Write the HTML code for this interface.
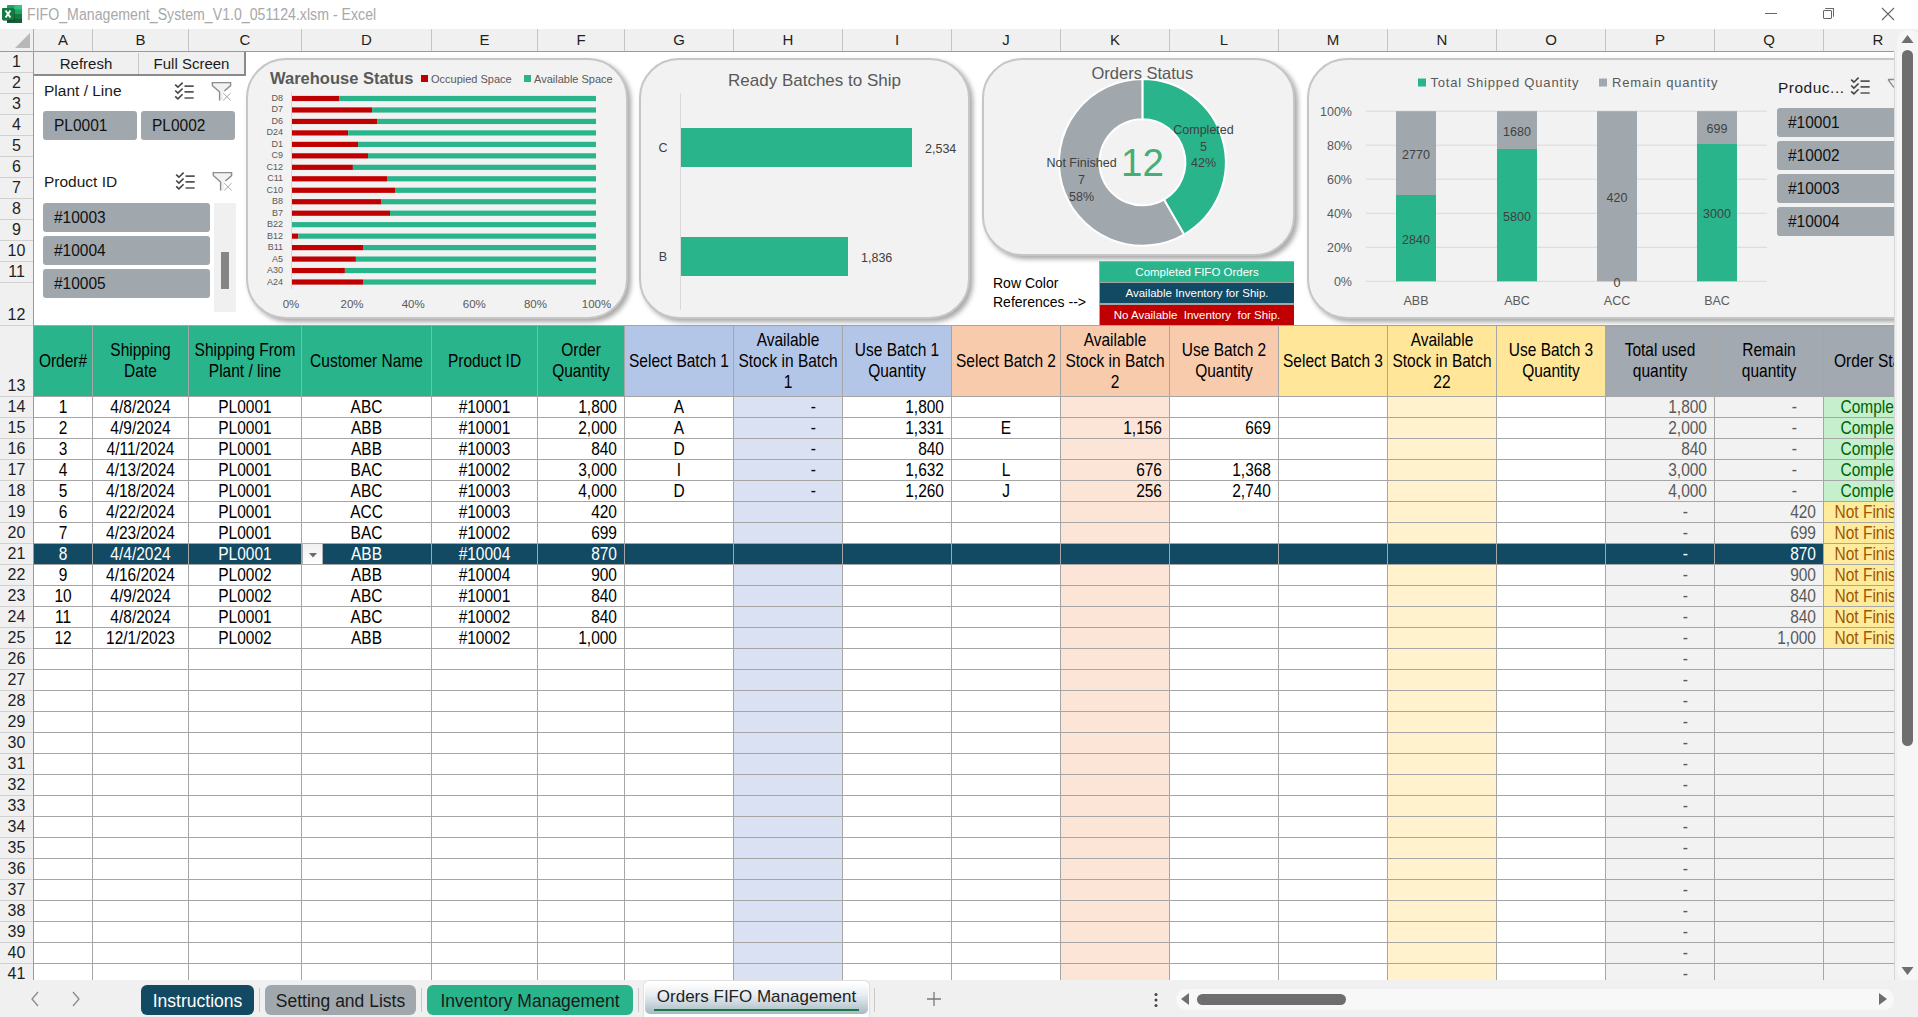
<!DOCTYPE html><html><head><meta charset="utf-8"><style>
*{margin:0;padding:0;box-sizing:border-box}
html,body{width:1918px;height:1017px;overflow:hidden;background:#fff;font-family:"Liberation Sans",sans-serif;position:relative}
.a{position:absolute}
.c{position:absolute;white-space:nowrap;overflow:hidden;font-size:15.5px;color:#000;line-height:22px}
.ctr{text-align:center}
.t{display:inline-block;transform:scaleY(1.17);transform-origin:50% 16.4px}
.hd .t{transform-origin:50% 15.9px}
.sy{display:inline-block;transform:scaleY(1.1);transform-origin:50% 20.5px}
.rt{text-align:right}
.hd{position:absolute;display:flex;align-items:center;justify-content:center;text-align:center;font-size:15.5px;line-height:21px;color:#000}
.colh{position:absolute;top:29px;height:22px;font-size:15px;line-height:22px;text-align:center;color:#1f1f1f;border-right:1px solid #c4c4c4}
.rowh{position:absolute;left:0;width:33px;font-size:16px;text-align:center;color:#1f1f1f;border-bottom:1px solid #d0d0d0}
</style></head><body>

<div class="a" style="left:0;top:0;width:1918px;height:29px;background:#fff"></div>
<svg class="a" style="left:0;top:0" width="26" height="26" viewBox="0 0 26 26">
<rect x="7" y="5" width="15" height="18" rx="0.8" fill="#21a366"/>
<rect x="14.5" y="5" width="7.5" height="4.5" fill="#33c481"/>
<rect x="7" y="14" width="15" height="4.5" fill="#107c41"/>
<rect x="7" y="18.5" width="15" height="4.5" fill="#185c37"/>
<rect x="3" y="9" width="12" height="12" fill="#0b3d20" opacity="0.5"/>
<rect x="2" y="8" width="12" height="12" rx="0.8" fill="#107c41"/>
<path d="M5.6 10.5L10.4 17.5M10.4 10.5L5.6 17.5" stroke="#fff" stroke-width="1.9"/>
</svg>
<div class="a" style="left:27px;top:5px;font-size:15.5px;line-height:20px;color:#a8a8a8;transform:scale(0.9135,1.1);transform-origin:0 15.4px">FIFO_Management_System_V1.0_051124.xlsm - Excel</div>
<div class="a" style="left:1765px;top:13px;width:12px;height:1px;background:#666"></div>
<div class="a" style="left:1823px;top:10px;width:9px;height:9px;border:1px solid #666;border-radius:1px;background:#fff"></div>
<div class="a" style="left:1825px;top:8px;width:9px;height:9px;border-top:1px solid #666;border-right:1px solid #666;border-radius:1px"></div>
<svg class="a" style="left:1881px;top:7px" width="14" height="14"><path d="M1 1L13 13M13 1L1 13" stroke="#666" stroke-width="1.1"/></svg>
<div class="a" style="left:0;top:29px;width:1894px;height:23px;background:#f0f0f0;border-bottom:1px solid #9a9a9a"></div>
<svg class="a" style="left:14px;top:33px" width="17" height="16"><path d="M16 0L16 15L1 15Z" fill="#b8b8b8"/></svg>
<div class="a" style="left:33px;top:29px;width:1px;height:23px;background:#ababab"></div>
<div class="colh" style="left:34px;width:59px">A</div>
<div class="colh" style="left:93px;width:96px">B</div>
<div class="colh" style="left:189px;width:113px">C</div>
<div class="colh" style="left:302px;width:130px">D</div>
<div class="colh" style="left:432px;width:106px">E</div>
<div class="colh" style="left:538px;width:87px">F</div>
<div class="colh" style="left:625px;width:109px">G</div>
<div class="colh" style="left:734px;width:109px">H</div>
<div class="colh" style="left:843px;width:109px">I</div>
<div class="colh" style="left:952px;width:109px">J</div>
<div class="colh" style="left:1061px;width:109px">K</div>
<div class="colh" style="left:1170px;width:109px">L</div>
<div class="colh" style="left:1279px;width:109px">M</div>
<div class="colh" style="left:1388px;width:109px">N</div>
<div class="colh" style="left:1497px;width:109px">O</div>
<div class="colh" style="left:1606px;width:109px">P</div>
<div class="colh" style="left:1715px;width:109px">Q</div>
<div class="colh" style="left:1824px;width:109px">R</div>
<div class="a" style="left:1894px;top:29px;width:24px;height:951px;background:#fff"></div>
<div class="a" style="left:0;top:52px;width:34px;height:928px;background:#f0f0f0;border-right:1px solid #9a9a9a"></div>
<div class="rowh" style="top:52px;height:21px;line-height:19px;padding-top:0px">1</div>
<div class="rowh" style="top:73px;height:21px;line-height:19px;padding-top:0px">2</div>
<div class="rowh" style="top:94px;height:21px;line-height:19px;padding-top:0px">3</div>
<div class="rowh" style="top:115px;height:21px;line-height:19px;padding-top:0px">4</div>
<div class="rowh" style="top:136px;height:21px;line-height:19px;padding-top:0px">5</div>
<div class="rowh" style="top:157px;height:21px;line-height:19px;padding-top:0px">6</div>
<div class="rowh" style="top:178px;height:21px;line-height:19px;padding-top:0px">7</div>
<div class="rowh" style="top:199px;height:21px;line-height:19px;padding-top:0px">8</div>
<div class="rowh" style="top:220px;height:21px;line-height:19px;padding-top:0px">9</div>
<div class="rowh" style="top:241px;height:21px;line-height:19px;padding-top:0px">10</div>
<div class="rowh" style="top:262px;height:21px;line-height:19px;padding-top:0px">11</div>
<div class="rowh" style="top:283px;height:43px;line-height:19px;padding-top:22px">12</div>
<div class="rowh" style="top:326px;height:71px;line-height:19px;padding-top:50px">13</div>
<div class="rowh" style="top:397px;height:21px;line-height:19px;padding-top:0px">14</div>
<div class="rowh" style="top:418px;height:21px;line-height:19px;padding-top:0px">15</div>
<div class="rowh" style="top:439px;height:21px;line-height:19px;padding-top:0px">16</div>
<div class="rowh" style="top:460px;height:21px;line-height:19px;padding-top:0px">17</div>
<div class="rowh" style="top:481px;height:21px;line-height:19px;padding-top:0px">18</div>
<div class="rowh" style="top:502px;height:21px;line-height:19px;padding-top:0px">19</div>
<div class="rowh" style="top:523px;height:21px;line-height:19px;padding-top:0px">20</div>
<div class="rowh" style="top:544px;height:21px;line-height:19px;padding-top:0px">21</div>
<div class="rowh" style="top:565px;height:21px;line-height:19px;padding-top:0px">22</div>
<div class="rowh" style="top:586px;height:21px;line-height:19px;padding-top:0px">23</div>
<div class="rowh" style="top:607px;height:21px;line-height:19px;padding-top:0px">24</div>
<div class="rowh" style="top:628px;height:21px;line-height:19px;padding-top:0px">25</div>
<div class="rowh" style="top:649px;height:21px;line-height:19px;padding-top:0px">26</div>
<div class="rowh" style="top:670px;height:21px;line-height:19px;padding-top:0px">27</div>
<div class="rowh" style="top:691px;height:21px;line-height:19px;padding-top:0px">28</div>
<div class="rowh" style="top:712px;height:21px;line-height:19px;padding-top:0px">29</div>
<div class="rowh" style="top:733px;height:21px;line-height:19px;padding-top:0px">30</div>
<div class="rowh" style="top:754px;height:21px;line-height:19px;padding-top:0px">31</div>
<div class="rowh" style="top:775px;height:21px;line-height:19px;padding-top:0px">32</div>
<div class="rowh" style="top:796px;height:21px;line-height:19px;padding-top:0px">33</div>
<div class="rowh" style="top:817px;height:21px;line-height:19px;padding-top:0px">34</div>
<div class="rowh" style="top:838px;height:21px;line-height:19px;padding-top:0px">35</div>
<div class="rowh" style="top:859px;height:21px;line-height:19px;padding-top:0px">36</div>
<div class="rowh" style="top:880px;height:21px;line-height:19px;padding-top:0px">37</div>
<div class="rowh" style="top:901px;height:21px;line-height:19px;padding-top:0px">38</div>
<div class="rowh" style="top:922px;height:21px;line-height:19px;padding-top:0px">39</div>
<div class="rowh" style="top:943px;height:21px;line-height:19px;padding-top:0px">40</div>
<div class="rowh" style="top:964px;height:21px;line-height:19px;padding-top:0px">41</div>
<div class="a" style="left:34px;top:52px;width:1860px;height:928px;overflow:hidden" id="grid">
<div class="hd" style="left:-1px;top:273px;width:60px;height:72px;background:#2ab48c;border:1px solid #a6a6a6;"><div><span class="t">Order#</span></div></div>
<div class="hd" style="left:58px;top:273px;width:97px;height:72px;background:#2ab48c;border:1px solid #a6a6a6;"><div><span class="t">Shipping</span><br><span class="t">Date</span></div></div>
<div class="hd" style="left:154px;top:273px;width:114px;height:72px;background:#2ab48c;border:1px solid #a6a6a6;"><div><span class="t">Shipping From</span><br><span class="t">Plant / line</span></div></div>
<div class="hd" style="left:267px;top:273px;width:131px;height:72px;background:#2ab48c;border:1px solid #a6a6a6;"><div><span class="t">Customer Name</span></div></div>
<div class="hd" style="left:397px;top:273px;width:107px;height:72px;background:#2ab48c;border:1px solid #a6a6a6;"><div><span class="t">Product ID</span></div></div>
<div class="hd" style="left:503px;top:273px;width:88px;height:72px;background:#2ab48c;border:1px solid #a6a6a6;"><div><span class="t">Order</span><br><span class="t">Quantity</span></div></div>
<div class="hd" style="left:590px;top:273px;width:110px;height:72px;background:#b4c6e7;border:1px solid #a6a6a6;"><div><span class="t">Select Batch 1</span></div></div>
<div class="hd" style="left:699px;top:273px;width:110px;height:72px;background:#b4c6e7;border:1px solid #a6a6a6;"><div><span class="t">Available</span><br><span class="t">Stock in Batch</span><br><span class="t">1</span></div></div>
<div class="hd" style="left:808px;top:273px;width:110px;height:72px;background:#b4c6e7;border:1px solid #a6a6a6;"><div><span class="t">Use Batch 1</span><br><span class="t">Quantity</span></div></div>
<div class="hd" style="left:917px;top:273px;width:110px;height:72px;background:#f8cbad;border:1px solid #a6a6a6;"><div><span class="t">Select Batch 2</span></div></div>
<div class="hd" style="left:1026px;top:273px;width:110px;height:72px;background:#f8cbad;border:1px solid #a6a6a6;"><div><span class="t">Available</span><br><span class="t">Stock in Batch</span><br><span class="t">2</span></div></div>
<div class="hd" style="left:1135px;top:273px;width:110px;height:72px;background:#f8cbad;border:1px solid #a6a6a6;"><div><span class="t">Use Batch 2</span><br><span class="t">Quantity</span></div></div>
<div class="hd" style="left:1244px;top:273px;width:110px;height:72px;background:#ffe699;border:1px solid #a6a6a6;"><div><span class="t">Select Batch 3</span></div></div>
<div class="hd" style="left:1353px;top:273px;width:110px;height:72px;background:#ffe699;border:1px solid #a6a6a6;"><div><span class="t">Available</span><br><span class="t">Stock in Batch</span><br><span class="t">22</span></div></div>
<div class="hd" style="left:1462px;top:273px;width:110px;height:72px;background:#ffe699;border:1px solid #a6a6a6;"><div><span class="t">Use Batch 3</span><br><span class="t">Quantity</span></div></div>
<div class="hd" style="left:1571px;top:273px;width:110px;height:72px;background:#a2a9b0;border:1px solid #a6a6a6;"><div><span class="t">Total used</span><br><span class="t">quantity</span></div></div>
<div class="hd" style="left:1680px;top:273px;width:110px;height:72px;background:#a2a9b0;border:1px solid #a6a6a6;"><div><span class="t">Remain</span><br><span class="t">quantity</span></div></div>
<div class="hd" style="left:1789px;top:273px;width:110px;height:72px;background:#a2a9b0;border:1px solid #a6a6a6;"><div><span class="t">Order Status</span></div></div>
<div class="c ctr" style="left:-1px;top:344px;width:60px;height:22px;background:#fff;border:1px solid #a6a6a6;color:#000;"><span class="t">1</span></div>
<div class="c ctr" style="left:58px;top:344px;width:97px;height:22px;background:#fff;border:1px solid #a6a6a6;color:#000;"><span class="t">4/8/2024</span></div>
<div class="c ctr" style="left:154px;top:344px;width:114px;height:22px;background:#fff;border:1px solid #a6a6a6;color:#000;"><span class="t">PL0001</span></div>
<div class="c ctr" style="left:267px;top:344px;width:131px;height:22px;background:#fff;border:1px solid #a6a6a6;color:#000;"><span class="t">ABC</span></div>
<div class="c ctr" style="left:397px;top:344px;width:107px;height:22px;background:#fff;border:1px solid #a6a6a6;color:#000;"><span class="t">#10001</span></div>
<div class="c rt" style="left:503px;top:344px;width:88px;height:22px;background:#fff;border:1px solid #a6a6a6;color:#000;padding-right:7px;"><span class="t">1,800</span></div>
<div class="c ctr" style="left:590px;top:344px;width:110px;height:22px;background:#fff;border:1px solid #a6a6a6;color:#000;"><span class="t">A</span></div>
<div class="c rt" style="left:699px;top:344px;width:110px;height:22px;background:#d9e1f2;border:1px solid #a6a6a6;color:#000;padding-right:26px;"><span class="t">-</span></div>
<div class="c rt" style="left:808px;top:344px;width:110px;height:22px;background:#fff;border:1px solid #a6a6a6;color:#000;padding-right:7px;"><span class="t">1,800</span></div>
<div class="c ctr" style="left:917px;top:344px;width:110px;height:22px;background:#fff;border:1px solid #a6a6a6;color:#000;"></div>
<div class="c rt" style="left:1026px;top:344px;width:110px;height:22px;background:#fce4d6;border:1px solid #a6a6a6;color:#000;padding-right:7px;"></div>
<div class="c rt" style="left:1135px;top:344px;width:110px;height:22px;background:#fff;border:1px solid #a6a6a6;color:#000;padding-right:7px;"></div>
<div class="c ctr" style="left:1244px;top:344px;width:110px;height:22px;background:#fff;border:1px solid #a6a6a6;color:#000;"></div>
<div class="c rt" style="left:1353px;top:344px;width:110px;height:22px;background:#fff2cc;border:1px solid #a6a6a6;color:#000;padding-right:7px;"></div>
<div class="c rt" style="left:1462px;top:344px;width:110px;height:22px;background:#fff;border:1px solid #a6a6a6;color:#000;padding-right:7px;"></div>
<div class="c rt" style="left:1571px;top:344px;width:110px;height:22px;background:#f2f2f2;border:1px solid #a6a6a6;color:#595959;padding-right:7px;"><span class="t">1,800</span></div>
<div class="c rt" style="left:1680px;top:344px;width:110px;height:22px;background:#f2f2f2;border:1px solid #a6a6a6;color:#595959;padding-right:26px;"><span class="t">-</span></div>
<div class="c ctr" style="left:1789px;top:344px;width:110px;height:22px;background:#c6efce;border:1px solid #a6a6a6;color:#006100;padding-left:0px;"><span class="t">Completed</span></div>
<div class="c ctr" style="left:-1px;top:365px;width:60px;height:22px;background:#fff;border:1px solid #a6a6a6;color:#000;"><span class="t">2</span></div>
<div class="c ctr" style="left:58px;top:365px;width:97px;height:22px;background:#fff;border:1px solid #a6a6a6;color:#000;"><span class="t">4/9/2024</span></div>
<div class="c ctr" style="left:154px;top:365px;width:114px;height:22px;background:#fff;border:1px solid #a6a6a6;color:#000;"><span class="t">PL0001</span></div>
<div class="c ctr" style="left:267px;top:365px;width:131px;height:22px;background:#fff;border:1px solid #a6a6a6;color:#000;"><span class="t">ABB</span></div>
<div class="c ctr" style="left:397px;top:365px;width:107px;height:22px;background:#fff;border:1px solid #a6a6a6;color:#000;"><span class="t">#10001</span></div>
<div class="c rt" style="left:503px;top:365px;width:88px;height:22px;background:#fff;border:1px solid #a6a6a6;color:#000;padding-right:7px;"><span class="t">2,000</span></div>
<div class="c ctr" style="left:590px;top:365px;width:110px;height:22px;background:#fff;border:1px solid #a6a6a6;color:#000;"><span class="t">A</span></div>
<div class="c rt" style="left:699px;top:365px;width:110px;height:22px;background:#d9e1f2;border:1px solid #a6a6a6;color:#000;padding-right:26px;"><span class="t">-</span></div>
<div class="c rt" style="left:808px;top:365px;width:110px;height:22px;background:#fff;border:1px solid #a6a6a6;color:#000;padding-right:7px;"><span class="t">1,331</span></div>
<div class="c ctr" style="left:917px;top:365px;width:110px;height:22px;background:#fff;border:1px solid #a6a6a6;color:#000;"><span class="t">E</span></div>
<div class="c rt" style="left:1026px;top:365px;width:110px;height:22px;background:#fce4d6;border:1px solid #a6a6a6;color:#000;padding-right:7px;"><span class="t">1,156</span></div>
<div class="c rt" style="left:1135px;top:365px;width:110px;height:22px;background:#fff;border:1px solid #a6a6a6;color:#000;padding-right:7px;"><span class="t">669</span></div>
<div class="c ctr" style="left:1244px;top:365px;width:110px;height:22px;background:#fff;border:1px solid #a6a6a6;color:#000;"></div>
<div class="c rt" style="left:1353px;top:365px;width:110px;height:22px;background:#fff2cc;border:1px solid #a6a6a6;color:#000;padding-right:7px;"></div>
<div class="c rt" style="left:1462px;top:365px;width:110px;height:22px;background:#fff;border:1px solid #a6a6a6;color:#000;padding-right:7px;"></div>
<div class="c rt" style="left:1571px;top:365px;width:110px;height:22px;background:#f2f2f2;border:1px solid #a6a6a6;color:#595959;padding-right:7px;"><span class="t">2,000</span></div>
<div class="c rt" style="left:1680px;top:365px;width:110px;height:22px;background:#f2f2f2;border:1px solid #a6a6a6;color:#595959;padding-right:26px;"><span class="t">-</span></div>
<div class="c ctr" style="left:1789px;top:365px;width:110px;height:22px;background:#c6efce;border:1px solid #a6a6a6;color:#006100;padding-left:0px;"><span class="t">Completed</span></div>
<div class="c ctr" style="left:-1px;top:386px;width:60px;height:22px;background:#fff;border:1px solid #a6a6a6;color:#000;"><span class="t">3</span></div>
<div class="c ctr" style="left:58px;top:386px;width:97px;height:22px;background:#fff;border:1px solid #a6a6a6;color:#000;"><span class="t">4/11/2024</span></div>
<div class="c ctr" style="left:154px;top:386px;width:114px;height:22px;background:#fff;border:1px solid #a6a6a6;color:#000;"><span class="t">PL0001</span></div>
<div class="c ctr" style="left:267px;top:386px;width:131px;height:22px;background:#fff;border:1px solid #a6a6a6;color:#000;"><span class="t">ABB</span></div>
<div class="c ctr" style="left:397px;top:386px;width:107px;height:22px;background:#fff;border:1px solid #a6a6a6;color:#000;"><span class="t">#10003</span></div>
<div class="c rt" style="left:503px;top:386px;width:88px;height:22px;background:#fff;border:1px solid #a6a6a6;color:#000;padding-right:7px;"><span class="t">840</span></div>
<div class="c ctr" style="left:590px;top:386px;width:110px;height:22px;background:#fff;border:1px solid #a6a6a6;color:#000;"><span class="t">D</span></div>
<div class="c rt" style="left:699px;top:386px;width:110px;height:22px;background:#d9e1f2;border:1px solid #a6a6a6;color:#000;padding-right:26px;"><span class="t">-</span></div>
<div class="c rt" style="left:808px;top:386px;width:110px;height:22px;background:#fff;border:1px solid #a6a6a6;color:#000;padding-right:7px;"><span class="t">840</span></div>
<div class="c ctr" style="left:917px;top:386px;width:110px;height:22px;background:#fff;border:1px solid #a6a6a6;color:#000;"></div>
<div class="c rt" style="left:1026px;top:386px;width:110px;height:22px;background:#fce4d6;border:1px solid #a6a6a6;color:#000;padding-right:7px;"></div>
<div class="c rt" style="left:1135px;top:386px;width:110px;height:22px;background:#fff;border:1px solid #a6a6a6;color:#000;padding-right:7px;"></div>
<div class="c ctr" style="left:1244px;top:386px;width:110px;height:22px;background:#fff;border:1px solid #a6a6a6;color:#000;"></div>
<div class="c rt" style="left:1353px;top:386px;width:110px;height:22px;background:#fff2cc;border:1px solid #a6a6a6;color:#000;padding-right:7px;"></div>
<div class="c rt" style="left:1462px;top:386px;width:110px;height:22px;background:#fff;border:1px solid #a6a6a6;color:#000;padding-right:7px;"></div>
<div class="c rt" style="left:1571px;top:386px;width:110px;height:22px;background:#f2f2f2;border:1px solid #a6a6a6;color:#595959;padding-right:7px;"><span class="t">840</span></div>
<div class="c rt" style="left:1680px;top:386px;width:110px;height:22px;background:#f2f2f2;border:1px solid #a6a6a6;color:#595959;padding-right:26px;"><span class="t">-</span></div>
<div class="c ctr" style="left:1789px;top:386px;width:110px;height:22px;background:#c6efce;border:1px solid #a6a6a6;color:#006100;padding-left:0px;"><span class="t">Completed</span></div>
<div class="c ctr" style="left:-1px;top:407px;width:60px;height:22px;background:#fff;border:1px solid #a6a6a6;color:#000;"><span class="t">4</span></div>
<div class="c ctr" style="left:58px;top:407px;width:97px;height:22px;background:#fff;border:1px solid #a6a6a6;color:#000;"><span class="t">4/13/2024</span></div>
<div class="c ctr" style="left:154px;top:407px;width:114px;height:22px;background:#fff;border:1px solid #a6a6a6;color:#000;"><span class="t">PL0001</span></div>
<div class="c ctr" style="left:267px;top:407px;width:131px;height:22px;background:#fff;border:1px solid #a6a6a6;color:#000;"><span class="t">BAC</span></div>
<div class="c ctr" style="left:397px;top:407px;width:107px;height:22px;background:#fff;border:1px solid #a6a6a6;color:#000;"><span class="t">#10002</span></div>
<div class="c rt" style="left:503px;top:407px;width:88px;height:22px;background:#fff;border:1px solid #a6a6a6;color:#000;padding-right:7px;"><span class="t">3,000</span></div>
<div class="c ctr" style="left:590px;top:407px;width:110px;height:22px;background:#fff;border:1px solid #a6a6a6;color:#000;"><span class="t">I</span></div>
<div class="c rt" style="left:699px;top:407px;width:110px;height:22px;background:#d9e1f2;border:1px solid #a6a6a6;color:#000;padding-right:26px;"><span class="t">-</span></div>
<div class="c rt" style="left:808px;top:407px;width:110px;height:22px;background:#fff;border:1px solid #a6a6a6;color:#000;padding-right:7px;"><span class="t">1,632</span></div>
<div class="c ctr" style="left:917px;top:407px;width:110px;height:22px;background:#fff;border:1px solid #a6a6a6;color:#000;"><span class="t">L</span></div>
<div class="c rt" style="left:1026px;top:407px;width:110px;height:22px;background:#fce4d6;border:1px solid #a6a6a6;color:#000;padding-right:7px;"><span class="t">676</span></div>
<div class="c rt" style="left:1135px;top:407px;width:110px;height:22px;background:#fff;border:1px solid #a6a6a6;color:#000;padding-right:7px;"><span class="t">1,368</span></div>
<div class="c ctr" style="left:1244px;top:407px;width:110px;height:22px;background:#fff;border:1px solid #a6a6a6;color:#000;"></div>
<div class="c rt" style="left:1353px;top:407px;width:110px;height:22px;background:#fff2cc;border:1px solid #a6a6a6;color:#000;padding-right:7px;"></div>
<div class="c rt" style="left:1462px;top:407px;width:110px;height:22px;background:#fff;border:1px solid #a6a6a6;color:#000;padding-right:7px;"></div>
<div class="c rt" style="left:1571px;top:407px;width:110px;height:22px;background:#f2f2f2;border:1px solid #a6a6a6;color:#595959;padding-right:7px;"><span class="t">3,000</span></div>
<div class="c rt" style="left:1680px;top:407px;width:110px;height:22px;background:#f2f2f2;border:1px solid #a6a6a6;color:#595959;padding-right:26px;"><span class="t">-</span></div>
<div class="c ctr" style="left:1789px;top:407px;width:110px;height:22px;background:#c6efce;border:1px solid #a6a6a6;color:#006100;padding-left:0px;"><span class="t">Completed</span></div>
<div class="c ctr" style="left:-1px;top:428px;width:60px;height:22px;background:#fff;border:1px solid #a6a6a6;color:#000;"><span class="t">5</span></div>
<div class="c ctr" style="left:58px;top:428px;width:97px;height:22px;background:#fff;border:1px solid #a6a6a6;color:#000;"><span class="t">4/18/2024</span></div>
<div class="c ctr" style="left:154px;top:428px;width:114px;height:22px;background:#fff;border:1px solid #a6a6a6;color:#000;"><span class="t">PL0001</span></div>
<div class="c ctr" style="left:267px;top:428px;width:131px;height:22px;background:#fff;border:1px solid #a6a6a6;color:#000;"><span class="t">ABC</span></div>
<div class="c ctr" style="left:397px;top:428px;width:107px;height:22px;background:#fff;border:1px solid #a6a6a6;color:#000;"><span class="t">#10003</span></div>
<div class="c rt" style="left:503px;top:428px;width:88px;height:22px;background:#fff;border:1px solid #a6a6a6;color:#000;padding-right:7px;"><span class="t">4,000</span></div>
<div class="c ctr" style="left:590px;top:428px;width:110px;height:22px;background:#fff;border:1px solid #a6a6a6;color:#000;"><span class="t">D</span></div>
<div class="c rt" style="left:699px;top:428px;width:110px;height:22px;background:#d9e1f2;border:1px solid #a6a6a6;color:#000;padding-right:26px;"><span class="t">-</span></div>
<div class="c rt" style="left:808px;top:428px;width:110px;height:22px;background:#fff;border:1px solid #a6a6a6;color:#000;padding-right:7px;"><span class="t">1,260</span></div>
<div class="c ctr" style="left:917px;top:428px;width:110px;height:22px;background:#fff;border:1px solid #a6a6a6;color:#000;"><span class="t">J</span></div>
<div class="c rt" style="left:1026px;top:428px;width:110px;height:22px;background:#fce4d6;border:1px solid #a6a6a6;color:#000;padding-right:7px;"><span class="t">256</span></div>
<div class="c rt" style="left:1135px;top:428px;width:110px;height:22px;background:#fff;border:1px solid #a6a6a6;color:#000;padding-right:7px;"><span class="t">2,740</span></div>
<div class="c ctr" style="left:1244px;top:428px;width:110px;height:22px;background:#fff;border:1px solid #a6a6a6;color:#000;"></div>
<div class="c rt" style="left:1353px;top:428px;width:110px;height:22px;background:#fff2cc;border:1px solid #a6a6a6;color:#000;padding-right:7px;"></div>
<div class="c rt" style="left:1462px;top:428px;width:110px;height:22px;background:#fff;border:1px solid #a6a6a6;color:#000;padding-right:7px;"></div>
<div class="c rt" style="left:1571px;top:428px;width:110px;height:22px;background:#f2f2f2;border:1px solid #a6a6a6;color:#595959;padding-right:7px;"><span class="t">4,000</span></div>
<div class="c rt" style="left:1680px;top:428px;width:110px;height:22px;background:#f2f2f2;border:1px solid #a6a6a6;color:#595959;padding-right:26px;"><span class="t">-</span></div>
<div class="c ctr" style="left:1789px;top:428px;width:110px;height:22px;background:#c6efce;border:1px solid #a6a6a6;color:#006100;padding-left:0px;"><span class="t">Completed</span></div>
<div class="c ctr" style="left:-1px;top:449px;width:60px;height:22px;background:#fff;border:1px solid #a6a6a6;color:#000;"><span class="t">6</span></div>
<div class="c ctr" style="left:58px;top:449px;width:97px;height:22px;background:#fff;border:1px solid #a6a6a6;color:#000;"><span class="t">4/22/2024</span></div>
<div class="c ctr" style="left:154px;top:449px;width:114px;height:22px;background:#fff;border:1px solid #a6a6a6;color:#000;"><span class="t">PL0001</span></div>
<div class="c ctr" style="left:267px;top:449px;width:131px;height:22px;background:#fff;border:1px solid #a6a6a6;color:#000;"><span class="t">ACC</span></div>
<div class="c ctr" style="left:397px;top:449px;width:107px;height:22px;background:#fff;border:1px solid #a6a6a6;color:#000;"><span class="t">#10003</span></div>
<div class="c rt" style="left:503px;top:449px;width:88px;height:22px;background:#fff;border:1px solid #a6a6a6;color:#000;padding-right:7px;"><span class="t">420</span></div>
<div class="c ctr" style="left:590px;top:449px;width:110px;height:22px;background:#fff;border:1px solid #a6a6a6;color:#000;"></div>
<div class="c rt" style="left:699px;top:449px;width:110px;height:22px;background:#d9e1f2;border:1px solid #a6a6a6;color:#000;padding-right:7px;"></div>
<div class="c rt" style="left:808px;top:449px;width:110px;height:22px;background:#fff;border:1px solid #a6a6a6;color:#000;padding-right:7px;"></div>
<div class="c ctr" style="left:917px;top:449px;width:110px;height:22px;background:#fff;border:1px solid #a6a6a6;color:#000;"></div>
<div class="c rt" style="left:1026px;top:449px;width:110px;height:22px;background:#fce4d6;border:1px solid #a6a6a6;color:#000;padding-right:7px;"></div>
<div class="c rt" style="left:1135px;top:449px;width:110px;height:22px;background:#fff;border:1px solid #a6a6a6;color:#000;padding-right:7px;"></div>
<div class="c ctr" style="left:1244px;top:449px;width:110px;height:22px;background:#fff;border:1px solid #a6a6a6;color:#000;"></div>
<div class="c rt" style="left:1353px;top:449px;width:110px;height:22px;background:#fff2cc;border:1px solid #a6a6a6;color:#000;padding-right:7px;"></div>
<div class="c rt" style="left:1462px;top:449px;width:110px;height:22px;background:#fff;border:1px solid #a6a6a6;color:#000;padding-right:7px;"></div>
<div class="c rt" style="left:1571px;top:449px;width:110px;height:22px;background:#f2f2f2;border:1px solid #a6a6a6;color:#595959;padding-right:26px;"><span class="t">-</span></div>
<div class="c rt" style="left:1680px;top:449px;width:110px;height:22px;background:#f2f2f2;border:1px solid #a6a6a6;color:#595959;padding-right:7px;"><span class="t">420</span></div>
<div class="c ctr" style="left:1789px;top:449px;width:110px;height:22px;background:#ffeb9c;border:1px solid #a6a6a6;color:#9c5700;padding-left:0px;"><span class="t">Not Finished</span></div>
<div class="c ctr" style="left:-1px;top:470px;width:60px;height:22px;background:#fff;border:1px solid #a6a6a6;color:#000;"><span class="t">7</span></div>
<div class="c ctr" style="left:58px;top:470px;width:97px;height:22px;background:#fff;border:1px solid #a6a6a6;color:#000;"><span class="t">4/23/2024</span></div>
<div class="c ctr" style="left:154px;top:470px;width:114px;height:22px;background:#fff;border:1px solid #a6a6a6;color:#000;"><span class="t">PL0001</span></div>
<div class="c ctr" style="left:267px;top:470px;width:131px;height:22px;background:#fff;border:1px solid #a6a6a6;color:#000;"><span class="t">BAC</span></div>
<div class="c ctr" style="left:397px;top:470px;width:107px;height:22px;background:#fff;border:1px solid #a6a6a6;color:#000;"><span class="t">#10002</span></div>
<div class="c rt" style="left:503px;top:470px;width:88px;height:22px;background:#fff;border:1px solid #a6a6a6;color:#000;padding-right:7px;"><span class="t">699</span></div>
<div class="c ctr" style="left:590px;top:470px;width:110px;height:22px;background:#fff;border:1px solid #a6a6a6;color:#000;"></div>
<div class="c rt" style="left:699px;top:470px;width:110px;height:22px;background:#d9e1f2;border:1px solid #a6a6a6;color:#000;padding-right:7px;"></div>
<div class="c rt" style="left:808px;top:470px;width:110px;height:22px;background:#fff;border:1px solid #a6a6a6;color:#000;padding-right:7px;"></div>
<div class="c ctr" style="left:917px;top:470px;width:110px;height:22px;background:#fff;border:1px solid #a6a6a6;color:#000;"></div>
<div class="c rt" style="left:1026px;top:470px;width:110px;height:22px;background:#fce4d6;border:1px solid #a6a6a6;color:#000;padding-right:7px;"></div>
<div class="c rt" style="left:1135px;top:470px;width:110px;height:22px;background:#fff;border:1px solid #a6a6a6;color:#000;padding-right:7px;"></div>
<div class="c ctr" style="left:1244px;top:470px;width:110px;height:22px;background:#fff;border:1px solid #a6a6a6;color:#000;"></div>
<div class="c rt" style="left:1353px;top:470px;width:110px;height:22px;background:#fff2cc;border:1px solid #a6a6a6;color:#000;padding-right:7px;"></div>
<div class="c rt" style="left:1462px;top:470px;width:110px;height:22px;background:#fff;border:1px solid #a6a6a6;color:#000;padding-right:7px;"></div>
<div class="c rt" style="left:1571px;top:470px;width:110px;height:22px;background:#f2f2f2;border:1px solid #a6a6a6;color:#595959;padding-right:26px;"><span class="t">-</span></div>
<div class="c rt" style="left:1680px;top:470px;width:110px;height:22px;background:#f2f2f2;border:1px solid #a6a6a6;color:#595959;padding-right:7px;"><span class="t">699</span></div>
<div class="c ctr" style="left:1789px;top:470px;width:110px;height:22px;background:#ffeb9c;border:1px solid #a6a6a6;color:#9c5700;padding-left:0px;"><span class="t">Not Finished</span></div>
<div class="c ctr" style="left:-1px;top:491px;width:60px;height:22px;background:#124a64;border:1px solid #a6a6a6;color:#fff;"><span class="t">8</span></div>
<div class="c ctr" style="left:58px;top:491px;width:97px;height:22px;background:#124a64;border:1px solid #a6a6a6;color:#fff;"><span class="t">4/4/2024</span></div>
<div class="c ctr" style="left:154px;top:491px;width:114px;height:22px;background:#124a64;border:1px solid #a6a6a6;color:#fff;"><span class="t">PL0001</span></div>
<div class="c ctr" style="left:267px;top:491px;width:131px;height:22px;background:#124a64;border:1px solid #a6a6a6;color:#fff;"><span class="t">ABB</span></div>
<div class="c ctr" style="left:397px;top:491px;width:107px;height:22px;background:#124a64;border:1px solid #a6a6a6;color:#fff;"><span class="t">#10004</span></div>
<div class="c rt" style="left:503px;top:491px;width:88px;height:22px;background:#124a64;border:1px solid #a6a6a6;color:#fff;padding-right:7px;"><span class="t">870</span></div>
<div class="c ctr" style="left:590px;top:491px;width:110px;height:22px;background:#124a64;border:1px solid #a6a6a6;color:#fff;"></div>
<div class="c rt" style="left:699px;top:491px;width:110px;height:22px;background:#124a64;border:1px solid #a6a6a6;color:#fff;padding-right:7px;"></div>
<div class="c rt" style="left:808px;top:491px;width:110px;height:22px;background:#124a64;border:1px solid #a6a6a6;color:#fff;padding-right:7px;"></div>
<div class="c ctr" style="left:917px;top:491px;width:110px;height:22px;background:#124a64;border:1px solid #a6a6a6;color:#fff;"></div>
<div class="c rt" style="left:1026px;top:491px;width:110px;height:22px;background:#124a64;border:1px solid #a6a6a6;color:#fff;padding-right:7px;"></div>
<div class="c rt" style="left:1135px;top:491px;width:110px;height:22px;background:#124a64;border:1px solid #a6a6a6;color:#fff;padding-right:7px;"></div>
<div class="c ctr" style="left:1244px;top:491px;width:110px;height:22px;background:#124a64;border:1px solid #a6a6a6;color:#fff;"></div>
<div class="c rt" style="left:1353px;top:491px;width:110px;height:22px;background:#124a64;border:1px solid #a6a6a6;color:#fff;padding-right:7px;"></div>
<div class="c rt" style="left:1462px;top:491px;width:110px;height:22px;background:#124a64;border:1px solid #a6a6a6;color:#fff;padding-right:7px;"></div>
<div class="c rt" style="left:1571px;top:491px;width:110px;height:22px;background:#124a64;border:1px solid #a6a6a6;color:#fff;padding-right:26px;"><span class="t">-</span></div>
<div class="c rt" style="left:1680px;top:491px;width:110px;height:22px;background:#124a64;border:1px solid #a6a6a6;color:#fff;padding-right:7px;"><span class="t">870</span></div>
<div class="c ctr" style="left:1789px;top:491px;width:110px;height:22px;background:#ffeb9c;border:1px solid #a6a6a6;color:#9c5700;padding-left:0px;"><span class="t">Not Finished</span></div>
<div class="c ctr" style="left:-1px;top:512px;width:60px;height:22px;background:#fff;border:1px solid #a6a6a6;color:#000;"><span class="t">9</span></div>
<div class="c ctr" style="left:58px;top:512px;width:97px;height:22px;background:#fff;border:1px solid #a6a6a6;color:#000;"><span class="t">4/16/2024</span></div>
<div class="c ctr" style="left:154px;top:512px;width:114px;height:22px;background:#fff;border:1px solid #a6a6a6;color:#000;"><span class="t">PL0002</span></div>
<div class="c ctr" style="left:267px;top:512px;width:131px;height:22px;background:#fff;border:1px solid #a6a6a6;color:#000;"><span class="t">ABB</span></div>
<div class="c ctr" style="left:397px;top:512px;width:107px;height:22px;background:#fff;border:1px solid #a6a6a6;color:#000;"><span class="t">#10004</span></div>
<div class="c rt" style="left:503px;top:512px;width:88px;height:22px;background:#fff;border:1px solid #a6a6a6;color:#000;padding-right:7px;"><span class="t">900</span></div>
<div class="c ctr" style="left:590px;top:512px;width:110px;height:22px;background:#fff;border:1px solid #a6a6a6;color:#000;"></div>
<div class="c rt" style="left:699px;top:512px;width:110px;height:22px;background:#d9e1f2;border:1px solid #a6a6a6;color:#000;padding-right:7px;"></div>
<div class="c rt" style="left:808px;top:512px;width:110px;height:22px;background:#fff;border:1px solid #a6a6a6;color:#000;padding-right:7px;"></div>
<div class="c ctr" style="left:917px;top:512px;width:110px;height:22px;background:#fff;border:1px solid #a6a6a6;color:#000;"></div>
<div class="c rt" style="left:1026px;top:512px;width:110px;height:22px;background:#fce4d6;border:1px solid #a6a6a6;color:#000;padding-right:7px;"></div>
<div class="c rt" style="left:1135px;top:512px;width:110px;height:22px;background:#fff;border:1px solid #a6a6a6;color:#000;padding-right:7px;"></div>
<div class="c ctr" style="left:1244px;top:512px;width:110px;height:22px;background:#fff;border:1px solid #a6a6a6;color:#000;"></div>
<div class="c rt" style="left:1353px;top:512px;width:110px;height:22px;background:#fff2cc;border:1px solid #a6a6a6;color:#000;padding-right:7px;"></div>
<div class="c rt" style="left:1462px;top:512px;width:110px;height:22px;background:#fff;border:1px solid #a6a6a6;color:#000;padding-right:7px;"></div>
<div class="c rt" style="left:1571px;top:512px;width:110px;height:22px;background:#f2f2f2;border:1px solid #a6a6a6;color:#595959;padding-right:26px;"><span class="t">-</span></div>
<div class="c rt" style="left:1680px;top:512px;width:110px;height:22px;background:#f2f2f2;border:1px solid #a6a6a6;color:#595959;padding-right:7px;"><span class="t">900</span></div>
<div class="c ctr" style="left:1789px;top:512px;width:110px;height:22px;background:#ffeb9c;border:1px solid #a6a6a6;color:#9c5700;padding-left:0px;"><span class="t">Not Finished</span></div>
<div class="c ctr" style="left:-1px;top:533px;width:60px;height:22px;background:#fff;border:1px solid #a6a6a6;color:#000;"><span class="t">10</span></div>
<div class="c ctr" style="left:58px;top:533px;width:97px;height:22px;background:#fff;border:1px solid #a6a6a6;color:#000;"><span class="t">4/9/2024</span></div>
<div class="c ctr" style="left:154px;top:533px;width:114px;height:22px;background:#fff;border:1px solid #a6a6a6;color:#000;"><span class="t">PL0002</span></div>
<div class="c ctr" style="left:267px;top:533px;width:131px;height:22px;background:#fff;border:1px solid #a6a6a6;color:#000;"><span class="t">ABC</span></div>
<div class="c ctr" style="left:397px;top:533px;width:107px;height:22px;background:#fff;border:1px solid #a6a6a6;color:#000;"><span class="t">#10001</span></div>
<div class="c rt" style="left:503px;top:533px;width:88px;height:22px;background:#fff;border:1px solid #a6a6a6;color:#000;padding-right:7px;"><span class="t">840</span></div>
<div class="c ctr" style="left:590px;top:533px;width:110px;height:22px;background:#fff;border:1px solid #a6a6a6;color:#000;"></div>
<div class="c rt" style="left:699px;top:533px;width:110px;height:22px;background:#d9e1f2;border:1px solid #a6a6a6;color:#000;padding-right:7px;"></div>
<div class="c rt" style="left:808px;top:533px;width:110px;height:22px;background:#fff;border:1px solid #a6a6a6;color:#000;padding-right:7px;"></div>
<div class="c ctr" style="left:917px;top:533px;width:110px;height:22px;background:#fff;border:1px solid #a6a6a6;color:#000;"></div>
<div class="c rt" style="left:1026px;top:533px;width:110px;height:22px;background:#fce4d6;border:1px solid #a6a6a6;color:#000;padding-right:7px;"></div>
<div class="c rt" style="left:1135px;top:533px;width:110px;height:22px;background:#fff;border:1px solid #a6a6a6;color:#000;padding-right:7px;"></div>
<div class="c ctr" style="left:1244px;top:533px;width:110px;height:22px;background:#fff;border:1px solid #a6a6a6;color:#000;"></div>
<div class="c rt" style="left:1353px;top:533px;width:110px;height:22px;background:#fff2cc;border:1px solid #a6a6a6;color:#000;padding-right:7px;"></div>
<div class="c rt" style="left:1462px;top:533px;width:110px;height:22px;background:#fff;border:1px solid #a6a6a6;color:#000;padding-right:7px;"></div>
<div class="c rt" style="left:1571px;top:533px;width:110px;height:22px;background:#f2f2f2;border:1px solid #a6a6a6;color:#595959;padding-right:26px;"><span class="t">-</span></div>
<div class="c rt" style="left:1680px;top:533px;width:110px;height:22px;background:#f2f2f2;border:1px solid #a6a6a6;color:#595959;padding-right:7px;"><span class="t">840</span></div>
<div class="c ctr" style="left:1789px;top:533px;width:110px;height:22px;background:#ffeb9c;border:1px solid #a6a6a6;color:#9c5700;padding-left:0px;"><span class="t">Not Finished</span></div>
<div class="c ctr" style="left:-1px;top:554px;width:60px;height:22px;background:#fff;border:1px solid #a6a6a6;color:#000;"><span class="t">11</span></div>
<div class="c ctr" style="left:58px;top:554px;width:97px;height:22px;background:#fff;border:1px solid #a6a6a6;color:#000;"><span class="t">4/8/2024</span></div>
<div class="c ctr" style="left:154px;top:554px;width:114px;height:22px;background:#fff;border:1px solid #a6a6a6;color:#000;"><span class="t">PL0001</span></div>
<div class="c ctr" style="left:267px;top:554px;width:131px;height:22px;background:#fff;border:1px solid #a6a6a6;color:#000;"><span class="t">ABC</span></div>
<div class="c ctr" style="left:397px;top:554px;width:107px;height:22px;background:#fff;border:1px solid #a6a6a6;color:#000;"><span class="t">#10002</span></div>
<div class="c rt" style="left:503px;top:554px;width:88px;height:22px;background:#fff;border:1px solid #a6a6a6;color:#000;padding-right:7px;"><span class="t">840</span></div>
<div class="c ctr" style="left:590px;top:554px;width:110px;height:22px;background:#fff;border:1px solid #a6a6a6;color:#000;"></div>
<div class="c rt" style="left:699px;top:554px;width:110px;height:22px;background:#d9e1f2;border:1px solid #a6a6a6;color:#000;padding-right:7px;"></div>
<div class="c rt" style="left:808px;top:554px;width:110px;height:22px;background:#fff;border:1px solid #a6a6a6;color:#000;padding-right:7px;"></div>
<div class="c ctr" style="left:917px;top:554px;width:110px;height:22px;background:#fff;border:1px solid #a6a6a6;color:#000;"></div>
<div class="c rt" style="left:1026px;top:554px;width:110px;height:22px;background:#fce4d6;border:1px solid #a6a6a6;color:#000;padding-right:7px;"></div>
<div class="c rt" style="left:1135px;top:554px;width:110px;height:22px;background:#fff;border:1px solid #a6a6a6;color:#000;padding-right:7px;"></div>
<div class="c ctr" style="left:1244px;top:554px;width:110px;height:22px;background:#fff;border:1px solid #a6a6a6;color:#000;"></div>
<div class="c rt" style="left:1353px;top:554px;width:110px;height:22px;background:#fff2cc;border:1px solid #a6a6a6;color:#000;padding-right:7px;"></div>
<div class="c rt" style="left:1462px;top:554px;width:110px;height:22px;background:#fff;border:1px solid #a6a6a6;color:#000;padding-right:7px;"></div>
<div class="c rt" style="left:1571px;top:554px;width:110px;height:22px;background:#f2f2f2;border:1px solid #a6a6a6;color:#595959;padding-right:26px;"><span class="t">-</span></div>
<div class="c rt" style="left:1680px;top:554px;width:110px;height:22px;background:#f2f2f2;border:1px solid #a6a6a6;color:#595959;padding-right:7px;"><span class="t">840</span></div>
<div class="c ctr" style="left:1789px;top:554px;width:110px;height:22px;background:#ffeb9c;border:1px solid #a6a6a6;color:#9c5700;padding-left:0px;"><span class="t">Not Finished</span></div>
<div class="c ctr" style="left:-1px;top:575px;width:60px;height:22px;background:#fff;border:1px solid #a6a6a6;color:#000;"><span class="t">12</span></div>
<div class="c ctr" style="left:58px;top:575px;width:97px;height:22px;background:#fff;border:1px solid #a6a6a6;color:#000;"><span class="t">12/1/2023</span></div>
<div class="c ctr" style="left:154px;top:575px;width:114px;height:22px;background:#fff;border:1px solid #a6a6a6;color:#000;"><span class="t">PL0002</span></div>
<div class="c ctr" style="left:267px;top:575px;width:131px;height:22px;background:#fff;border:1px solid #a6a6a6;color:#000;"><span class="t">ABB</span></div>
<div class="c ctr" style="left:397px;top:575px;width:107px;height:22px;background:#fff;border:1px solid #a6a6a6;color:#000;"><span class="t">#10002</span></div>
<div class="c rt" style="left:503px;top:575px;width:88px;height:22px;background:#fff;border:1px solid #a6a6a6;color:#000;padding-right:7px;"><span class="t">1,000</span></div>
<div class="c ctr" style="left:590px;top:575px;width:110px;height:22px;background:#fff;border:1px solid #a6a6a6;color:#000;"></div>
<div class="c rt" style="left:699px;top:575px;width:110px;height:22px;background:#d9e1f2;border:1px solid #a6a6a6;color:#000;padding-right:7px;"></div>
<div class="c rt" style="left:808px;top:575px;width:110px;height:22px;background:#fff;border:1px solid #a6a6a6;color:#000;padding-right:7px;"></div>
<div class="c ctr" style="left:917px;top:575px;width:110px;height:22px;background:#fff;border:1px solid #a6a6a6;color:#000;"></div>
<div class="c rt" style="left:1026px;top:575px;width:110px;height:22px;background:#fce4d6;border:1px solid #a6a6a6;color:#000;padding-right:7px;"></div>
<div class="c rt" style="left:1135px;top:575px;width:110px;height:22px;background:#fff;border:1px solid #a6a6a6;color:#000;padding-right:7px;"></div>
<div class="c ctr" style="left:1244px;top:575px;width:110px;height:22px;background:#fff;border:1px solid #a6a6a6;color:#000;"></div>
<div class="c rt" style="left:1353px;top:575px;width:110px;height:22px;background:#fff2cc;border:1px solid #a6a6a6;color:#000;padding-right:7px;"></div>
<div class="c rt" style="left:1462px;top:575px;width:110px;height:22px;background:#fff;border:1px solid #a6a6a6;color:#000;padding-right:7px;"></div>
<div class="c rt" style="left:1571px;top:575px;width:110px;height:22px;background:#f2f2f2;border:1px solid #a6a6a6;color:#595959;padding-right:26px;"><span class="t">-</span></div>
<div class="c rt" style="left:1680px;top:575px;width:110px;height:22px;background:#f2f2f2;border:1px solid #a6a6a6;color:#595959;padding-right:7px;"><span class="t">1,000</span></div>
<div class="c ctr" style="left:1789px;top:575px;width:110px;height:22px;background:#ffeb9c;border:1px solid #a6a6a6;color:#9c5700;padding-left:0px;"><span class="t">Not Finished</span></div>
<div class="c ctr" style="left:-1px;top:596px;width:60px;height:22px;background:#fff;border:1px solid #a6a6a6;color:#000;"></div>
<div class="c ctr" style="left:58px;top:596px;width:97px;height:22px;background:#fff;border:1px solid #a6a6a6;color:#000;"></div>
<div class="c ctr" style="left:154px;top:596px;width:114px;height:22px;background:#fff;border:1px solid #a6a6a6;color:#000;"></div>
<div class="c ctr" style="left:267px;top:596px;width:131px;height:22px;background:#fff;border:1px solid #a6a6a6;color:#000;"></div>
<div class="c ctr" style="left:397px;top:596px;width:107px;height:22px;background:#fff;border:1px solid #a6a6a6;color:#000;"></div>
<div class="c rt" style="left:503px;top:596px;width:88px;height:22px;background:#fff;border:1px solid #a6a6a6;color:#000;padding-right:7px;"></div>
<div class="c ctr" style="left:590px;top:596px;width:110px;height:22px;background:#fff;border:1px solid #a6a6a6;color:#000;"></div>
<div class="c rt" style="left:699px;top:596px;width:110px;height:22px;background:#d9e1f2;border:1px solid #a6a6a6;color:#000;padding-right:7px;"></div>
<div class="c rt" style="left:808px;top:596px;width:110px;height:22px;background:#fff;border:1px solid #a6a6a6;color:#000;padding-right:7px;"></div>
<div class="c ctr" style="left:917px;top:596px;width:110px;height:22px;background:#fff;border:1px solid #a6a6a6;color:#000;"></div>
<div class="c rt" style="left:1026px;top:596px;width:110px;height:22px;background:#fce4d6;border:1px solid #a6a6a6;color:#000;padding-right:7px;"></div>
<div class="c rt" style="left:1135px;top:596px;width:110px;height:22px;background:#fff;border:1px solid #a6a6a6;color:#000;padding-right:7px;"></div>
<div class="c ctr" style="left:1244px;top:596px;width:110px;height:22px;background:#fff;border:1px solid #a6a6a6;color:#000;"></div>
<div class="c rt" style="left:1353px;top:596px;width:110px;height:22px;background:#fff2cc;border:1px solid #a6a6a6;color:#000;padding-right:7px;"></div>
<div class="c rt" style="left:1462px;top:596px;width:110px;height:22px;background:#fff;border:1px solid #a6a6a6;color:#000;padding-right:7px;"></div>
<div class="c rt" style="left:1571px;top:596px;width:110px;height:22px;background:#f2f2f2;border:1px solid #a6a6a6;color:#595959;padding-right:26px;"><span class="t">-</span></div>
<div class="c rt" style="left:1680px;top:596px;width:110px;height:22px;background:#f2f2f2;border:1px solid #a6a6a6;color:#595959;padding-right:7px;"></div>
<div class="c ctr" style="left:1789px;top:596px;width:110px;height:22px;background:#f2f2f2;border:1px solid #a6a6a6;color:#000;"></div>
<div class="c ctr" style="left:-1px;top:617px;width:60px;height:22px;background:#fff;border:1px solid #a6a6a6;color:#000;"></div>
<div class="c ctr" style="left:58px;top:617px;width:97px;height:22px;background:#fff;border:1px solid #a6a6a6;color:#000;"></div>
<div class="c ctr" style="left:154px;top:617px;width:114px;height:22px;background:#fff;border:1px solid #a6a6a6;color:#000;"></div>
<div class="c ctr" style="left:267px;top:617px;width:131px;height:22px;background:#fff;border:1px solid #a6a6a6;color:#000;"></div>
<div class="c ctr" style="left:397px;top:617px;width:107px;height:22px;background:#fff;border:1px solid #a6a6a6;color:#000;"></div>
<div class="c rt" style="left:503px;top:617px;width:88px;height:22px;background:#fff;border:1px solid #a6a6a6;color:#000;padding-right:7px;"></div>
<div class="c ctr" style="left:590px;top:617px;width:110px;height:22px;background:#fff;border:1px solid #a6a6a6;color:#000;"></div>
<div class="c rt" style="left:699px;top:617px;width:110px;height:22px;background:#d9e1f2;border:1px solid #a6a6a6;color:#000;padding-right:7px;"></div>
<div class="c rt" style="left:808px;top:617px;width:110px;height:22px;background:#fff;border:1px solid #a6a6a6;color:#000;padding-right:7px;"></div>
<div class="c ctr" style="left:917px;top:617px;width:110px;height:22px;background:#fff;border:1px solid #a6a6a6;color:#000;"></div>
<div class="c rt" style="left:1026px;top:617px;width:110px;height:22px;background:#fce4d6;border:1px solid #a6a6a6;color:#000;padding-right:7px;"></div>
<div class="c rt" style="left:1135px;top:617px;width:110px;height:22px;background:#fff;border:1px solid #a6a6a6;color:#000;padding-right:7px;"></div>
<div class="c ctr" style="left:1244px;top:617px;width:110px;height:22px;background:#fff;border:1px solid #a6a6a6;color:#000;"></div>
<div class="c rt" style="left:1353px;top:617px;width:110px;height:22px;background:#fff2cc;border:1px solid #a6a6a6;color:#000;padding-right:7px;"></div>
<div class="c rt" style="left:1462px;top:617px;width:110px;height:22px;background:#fff;border:1px solid #a6a6a6;color:#000;padding-right:7px;"></div>
<div class="c rt" style="left:1571px;top:617px;width:110px;height:22px;background:#f2f2f2;border:1px solid #a6a6a6;color:#595959;padding-right:26px;"><span class="t">-</span></div>
<div class="c rt" style="left:1680px;top:617px;width:110px;height:22px;background:#f2f2f2;border:1px solid #a6a6a6;color:#595959;padding-right:7px;"></div>
<div class="c ctr" style="left:1789px;top:617px;width:110px;height:22px;background:#f2f2f2;border:1px solid #a6a6a6;color:#000;"></div>
<div class="c ctr" style="left:-1px;top:638px;width:60px;height:22px;background:#fff;border:1px solid #a6a6a6;color:#000;"></div>
<div class="c ctr" style="left:58px;top:638px;width:97px;height:22px;background:#fff;border:1px solid #a6a6a6;color:#000;"></div>
<div class="c ctr" style="left:154px;top:638px;width:114px;height:22px;background:#fff;border:1px solid #a6a6a6;color:#000;"></div>
<div class="c ctr" style="left:267px;top:638px;width:131px;height:22px;background:#fff;border:1px solid #a6a6a6;color:#000;"></div>
<div class="c ctr" style="left:397px;top:638px;width:107px;height:22px;background:#fff;border:1px solid #a6a6a6;color:#000;"></div>
<div class="c rt" style="left:503px;top:638px;width:88px;height:22px;background:#fff;border:1px solid #a6a6a6;color:#000;padding-right:7px;"></div>
<div class="c ctr" style="left:590px;top:638px;width:110px;height:22px;background:#fff;border:1px solid #a6a6a6;color:#000;"></div>
<div class="c rt" style="left:699px;top:638px;width:110px;height:22px;background:#d9e1f2;border:1px solid #a6a6a6;color:#000;padding-right:7px;"></div>
<div class="c rt" style="left:808px;top:638px;width:110px;height:22px;background:#fff;border:1px solid #a6a6a6;color:#000;padding-right:7px;"></div>
<div class="c ctr" style="left:917px;top:638px;width:110px;height:22px;background:#fff;border:1px solid #a6a6a6;color:#000;"></div>
<div class="c rt" style="left:1026px;top:638px;width:110px;height:22px;background:#fce4d6;border:1px solid #a6a6a6;color:#000;padding-right:7px;"></div>
<div class="c rt" style="left:1135px;top:638px;width:110px;height:22px;background:#fff;border:1px solid #a6a6a6;color:#000;padding-right:7px;"></div>
<div class="c ctr" style="left:1244px;top:638px;width:110px;height:22px;background:#fff;border:1px solid #a6a6a6;color:#000;"></div>
<div class="c rt" style="left:1353px;top:638px;width:110px;height:22px;background:#fff2cc;border:1px solid #a6a6a6;color:#000;padding-right:7px;"></div>
<div class="c rt" style="left:1462px;top:638px;width:110px;height:22px;background:#fff;border:1px solid #a6a6a6;color:#000;padding-right:7px;"></div>
<div class="c rt" style="left:1571px;top:638px;width:110px;height:22px;background:#f2f2f2;border:1px solid #a6a6a6;color:#595959;padding-right:26px;"><span class="t">-</span></div>
<div class="c rt" style="left:1680px;top:638px;width:110px;height:22px;background:#f2f2f2;border:1px solid #a6a6a6;color:#595959;padding-right:7px;"></div>
<div class="c ctr" style="left:1789px;top:638px;width:110px;height:22px;background:#f2f2f2;border:1px solid #a6a6a6;color:#000;"></div>
<div class="c ctr" style="left:-1px;top:659px;width:60px;height:22px;background:#fff;border:1px solid #a6a6a6;color:#000;"></div>
<div class="c ctr" style="left:58px;top:659px;width:97px;height:22px;background:#fff;border:1px solid #a6a6a6;color:#000;"></div>
<div class="c ctr" style="left:154px;top:659px;width:114px;height:22px;background:#fff;border:1px solid #a6a6a6;color:#000;"></div>
<div class="c ctr" style="left:267px;top:659px;width:131px;height:22px;background:#fff;border:1px solid #a6a6a6;color:#000;"></div>
<div class="c ctr" style="left:397px;top:659px;width:107px;height:22px;background:#fff;border:1px solid #a6a6a6;color:#000;"></div>
<div class="c rt" style="left:503px;top:659px;width:88px;height:22px;background:#fff;border:1px solid #a6a6a6;color:#000;padding-right:7px;"></div>
<div class="c ctr" style="left:590px;top:659px;width:110px;height:22px;background:#fff;border:1px solid #a6a6a6;color:#000;"></div>
<div class="c rt" style="left:699px;top:659px;width:110px;height:22px;background:#d9e1f2;border:1px solid #a6a6a6;color:#000;padding-right:7px;"></div>
<div class="c rt" style="left:808px;top:659px;width:110px;height:22px;background:#fff;border:1px solid #a6a6a6;color:#000;padding-right:7px;"></div>
<div class="c ctr" style="left:917px;top:659px;width:110px;height:22px;background:#fff;border:1px solid #a6a6a6;color:#000;"></div>
<div class="c rt" style="left:1026px;top:659px;width:110px;height:22px;background:#fce4d6;border:1px solid #a6a6a6;color:#000;padding-right:7px;"></div>
<div class="c rt" style="left:1135px;top:659px;width:110px;height:22px;background:#fff;border:1px solid #a6a6a6;color:#000;padding-right:7px;"></div>
<div class="c ctr" style="left:1244px;top:659px;width:110px;height:22px;background:#fff;border:1px solid #a6a6a6;color:#000;"></div>
<div class="c rt" style="left:1353px;top:659px;width:110px;height:22px;background:#fff2cc;border:1px solid #a6a6a6;color:#000;padding-right:7px;"></div>
<div class="c rt" style="left:1462px;top:659px;width:110px;height:22px;background:#fff;border:1px solid #a6a6a6;color:#000;padding-right:7px;"></div>
<div class="c rt" style="left:1571px;top:659px;width:110px;height:22px;background:#f2f2f2;border:1px solid #a6a6a6;color:#595959;padding-right:26px;"><span class="t">-</span></div>
<div class="c rt" style="left:1680px;top:659px;width:110px;height:22px;background:#f2f2f2;border:1px solid #a6a6a6;color:#595959;padding-right:7px;"></div>
<div class="c ctr" style="left:1789px;top:659px;width:110px;height:22px;background:#f2f2f2;border:1px solid #a6a6a6;color:#000;"></div>
<div class="c ctr" style="left:-1px;top:680px;width:60px;height:22px;background:#fff;border:1px solid #a6a6a6;color:#000;"></div>
<div class="c ctr" style="left:58px;top:680px;width:97px;height:22px;background:#fff;border:1px solid #a6a6a6;color:#000;"></div>
<div class="c ctr" style="left:154px;top:680px;width:114px;height:22px;background:#fff;border:1px solid #a6a6a6;color:#000;"></div>
<div class="c ctr" style="left:267px;top:680px;width:131px;height:22px;background:#fff;border:1px solid #a6a6a6;color:#000;"></div>
<div class="c ctr" style="left:397px;top:680px;width:107px;height:22px;background:#fff;border:1px solid #a6a6a6;color:#000;"></div>
<div class="c rt" style="left:503px;top:680px;width:88px;height:22px;background:#fff;border:1px solid #a6a6a6;color:#000;padding-right:7px;"></div>
<div class="c ctr" style="left:590px;top:680px;width:110px;height:22px;background:#fff;border:1px solid #a6a6a6;color:#000;"></div>
<div class="c rt" style="left:699px;top:680px;width:110px;height:22px;background:#d9e1f2;border:1px solid #a6a6a6;color:#000;padding-right:7px;"></div>
<div class="c rt" style="left:808px;top:680px;width:110px;height:22px;background:#fff;border:1px solid #a6a6a6;color:#000;padding-right:7px;"></div>
<div class="c ctr" style="left:917px;top:680px;width:110px;height:22px;background:#fff;border:1px solid #a6a6a6;color:#000;"></div>
<div class="c rt" style="left:1026px;top:680px;width:110px;height:22px;background:#fce4d6;border:1px solid #a6a6a6;color:#000;padding-right:7px;"></div>
<div class="c rt" style="left:1135px;top:680px;width:110px;height:22px;background:#fff;border:1px solid #a6a6a6;color:#000;padding-right:7px;"></div>
<div class="c ctr" style="left:1244px;top:680px;width:110px;height:22px;background:#fff;border:1px solid #a6a6a6;color:#000;"></div>
<div class="c rt" style="left:1353px;top:680px;width:110px;height:22px;background:#fff2cc;border:1px solid #a6a6a6;color:#000;padding-right:7px;"></div>
<div class="c rt" style="left:1462px;top:680px;width:110px;height:22px;background:#fff;border:1px solid #a6a6a6;color:#000;padding-right:7px;"></div>
<div class="c rt" style="left:1571px;top:680px;width:110px;height:22px;background:#f2f2f2;border:1px solid #a6a6a6;color:#595959;padding-right:26px;"><span class="t">-</span></div>
<div class="c rt" style="left:1680px;top:680px;width:110px;height:22px;background:#f2f2f2;border:1px solid #a6a6a6;color:#595959;padding-right:7px;"></div>
<div class="c ctr" style="left:1789px;top:680px;width:110px;height:22px;background:#f2f2f2;border:1px solid #a6a6a6;color:#000;"></div>
<div class="c ctr" style="left:-1px;top:701px;width:60px;height:22px;background:#fff;border:1px solid #a6a6a6;color:#000;"></div>
<div class="c ctr" style="left:58px;top:701px;width:97px;height:22px;background:#fff;border:1px solid #a6a6a6;color:#000;"></div>
<div class="c ctr" style="left:154px;top:701px;width:114px;height:22px;background:#fff;border:1px solid #a6a6a6;color:#000;"></div>
<div class="c ctr" style="left:267px;top:701px;width:131px;height:22px;background:#fff;border:1px solid #a6a6a6;color:#000;"></div>
<div class="c ctr" style="left:397px;top:701px;width:107px;height:22px;background:#fff;border:1px solid #a6a6a6;color:#000;"></div>
<div class="c rt" style="left:503px;top:701px;width:88px;height:22px;background:#fff;border:1px solid #a6a6a6;color:#000;padding-right:7px;"></div>
<div class="c ctr" style="left:590px;top:701px;width:110px;height:22px;background:#fff;border:1px solid #a6a6a6;color:#000;"></div>
<div class="c rt" style="left:699px;top:701px;width:110px;height:22px;background:#d9e1f2;border:1px solid #a6a6a6;color:#000;padding-right:7px;"></div>
<div class="c rt" style="left:808px;top:701px;width:110px;height:22px;background:#fff;border:1px solid #a6a6a6;color:#000;padding-right:7px;"></div>
<div class="c ctr" style="left:917px;top:701px;width:110px;height:22px;background:#fff;border:1px solid #a6a6a6;color:#000;"></div>
<div class="c rt" style="left:1026px;top:701px;width:110px;height:22px;background:#fce4d6;border:1px solid #a6a6a6;color:#000;padding-right:7px;"></div>
<div class="c rt" style="left:1135px;top:701px;width:110px;height:22px;background:#fff;border:1px solid #a6a6a6;color:#000;padding-right:7px;"></div>
<div class="c ctr" style="left:1244px;top:701px;width:110px;height:22px;background:#fff;border:1px solid #a6a6a6;color:#000;"></div>
<div class="c rt" style="left:1353px;top:701px;width:110px;height:22px;background:#fff2cc;border:1px solid #a6a6a6;color:#000;padding-right:7px;"></div>
<div class="c rt" style="left:1462px;top:701px;width:110px;height:22px;background:#fff;border:1px solid #a6a6a6;color:#000;padding-right:7px;"></div>
<div class="c rt" style="left:1571px;top:701px;width:110px;height:22px;background:#f2f2f2;border:1px solid #a6a6a6;color:#595959;padding-right:26px;"><span class="t">-</span></div>
<div class="c rt" style="left:1680px;top:701px;width:110px;height:22px;background:#f2f2f2;border:1px solid #a6a6a6;color:#595959;padding-right:7px;"></div>
<div class="c ctr" style="left:1789px;top:701px;width:110px;height:22px;background:#f2f2f2;border:1px solid #a6a6a6;color:#000;"></div>
<div class="c ctr" style="left:-1px;top:722px;width:60px;height:22px;background:#fff;border:1px solid #a6a6a6;color:#000;"></div>
<div class="c ctr" style="left:58px;top:722px;width:97px;height:22px;background:#fff;border:1px solid #a6a6a6;color:#000;"></div>
<div class="c ctr" style="left:154px;top:722px;width:114px;height:22px;background:#fff;border:1px solid #a6a6a6;color:#000;"></div>
<div class="c ctr" style="left:267px;top:722px;width:131px;height:22px;background:#fff;border:1px solid #a6a6a6;color:#000;"></div>
<div class="c ctr" style="left:397px;top:722px;width:107px;height:22px;background:#fff;border:1px solid #a6a6a6;color:#000;"></div>
<div class="c rt" style="left:503px;top:722px;width:88px;height:22px;background:#fff;border:1px solid #a6a6a6;color:#000;padding-right:7px;"></div>
<div class="c ctr" style="left:590px;top:722px;width:110px;height:22px;background:#fff;border:1px solid #a6a6a6;color:#000;"></div>
<div class="c rt" style="left:699px;top:722px;width:110px;height:22px;background:#d9e1f2;border:1px solid #a6a6a6;color:#000;padding-right:7px;"></div>
<div class="c rt" style="left:808px;top:722px;width:110px;height:22px;background:#fff;border:1px solid #a6a6a6;color:#000;padding-right:7px;"></div>
<div class="c ctr" style="left:917px;top:722px;width:110px;height:22px;background:#fff;border:1px solid #a6a6a6;color:#000;"></div>
<div class="c rt" style="left:1026px;top:722px;width:110px;height:22px;background:#fce4d6;border:1px solid #a6a6a6;color:#000;padding-right:7px;"></div>
<div class="c rt" style="left:1135px;top:722px;width:110px;height:22px;background:#fff;border:1px solid #a6a6a6;color:#000;padding-right:7px;"></div>
<div class="c ctr" style="left:1244px;top:722px;width:110px;height:22px;background:#fff;border:1px solid #a6a6a6;color:#000;"></div>
<div class="c rt" style="left:1353px;top:722px;width:110px;height:22px;background:#fff2cc;border:1px solid #a6a6a6;color:#000;padding-right:7px;"></div>
<div class="c rt" style="left:1462px;top:722px;width:110px;height:22px;background:#fff;border:1px solid #a6a6a6;color:#000;padding-right:7px;"></div>
<div class="c rt" style="left:1571px;top:722px;width:110px;height:22px;background:#f2f2f2;border:1px solid #a6a6a6;color:#595959;padding-right:26px;"><span class="t">-</span></div>
<div class="c rt" style="left:1680px;top:722px;width:110px;height:22px;background:#f2f2f2;border:1px solid #a6a6a6;color:#595959;padding-right:7px;"></div>
<div class="c ctr" style="left:1789px;top:722px;width:110px;height:22px;background:#f2f2f2;border:1px solid #a6a6a6;color:#000;"></div>
<div class="c ctr" style="left:-1px;top:743px;width:60px;height:22px;background:#fff;border:1px solid #a6a6a6;color:#000;"></div>
<div class="c ctr" style="left:58px;top:743px;width:97px;height:22px;background:#fff;border:1px solid #a6a6a6;color:#000;"></div>
<div class="c ctr" style="left:154px;top:743px;width:114px;height:22px;background:#fff;border:1px solid #a6a6a6;color:#000;"></div>
<div class="c ctr" style="left:267px;top:743px;width:131px;height:22px;background:#fff;border:1px solid #a6a6a6;color:#000;"></div>
<div class="c ctr" style="left:397px;top:743px;width:107px;height:22px;background:#fff;border:1px solid #a6a6a6;color:#000;"></div>
<div class="c rt" style="left:503px;top:743px;width:88px;height:22px;background:#fff;border:1px solid #a6a6a6;color:#000;padding-right:7px;"></div>
<div class="c ctr" style="left:590px;top:743px;width:110px;height:22px;background:#fff;border:1px solid #a6a6a6;color:#000;"></div>
<div class="c rt" style="left:699px;top:743px;width:110px;height:22px;background:#d9e1f2;border:1px solid #a6a6a6;color:#000;padding-right:7px;"></div>
<div class="c rt" style="left:808px;top:743px;width:110px;height:22px;background:#fff;border:1px solid #a6a6a6;color:#000;padding-right:7px;"></div>
<div class="c ctr" style="left:917px;top:743px;width:110px;height:22px;background:#fff;border:1px solid #a6a6a6;color:#000;"></div>
<div class="c rt" style="left:1026px;top:743px;width:110px;height:22px;background:#fce4d6;border:1px solid #a6a6a6;color:#000;padding-right:7px;"></div>
<div class="c rt" style="left:1135px;top:743px;width:110px;height:22px;background:#fff;border:1px solid #a6a6a6;color:#000;padding-right:7px;"></div>
<div class="c ctr" style="left:1244px;top:743px;width:110px;height:22px;background:#fff;border:1px solid #a6a6a6;color:#000;"></div>
<div class="c rt" style="left:1353px;top:743px;width:110px;height:22px;background:#fff2cc;border:1px solid #a6a6a6;color:#000;padding-right:7px;"></div>
<div class="c rt" style="left:1462px;top:743px;width:110px;height:22px;background:#fff;border:1px solid #a6a6a6;color:#000;padding-right:7px;"></div>
<div class="c rt" style="left:1571px;top:743px;width:110px;height:22px;background:#f2f2f2;border:1px solid #a6a6a6;color:#595959;padding-right:26px;"><span class="t">-</span></div>
<div class="c rt" style="left:1680px;top:743px;width:110px;height:22px;background:#f2f2f2;border:1px solid #a6a6a6;color:#595959;padding-right:7px;"></div>
<div class="c ctr" style="left:1789px;top:743px;width:110px;height:22px;background:#f2f2f2;border:1px solid #a6a6a6;color:#000;"></div>
<div class="c ctr" style="left:-1px;top:764px;width:60px;height:22px;background:#fff;border:1px solid #a6a6a6;color:#000;"></div>
<div class="c ctr" style="left:58px;top:764px;width:97px;height:22px;background:#fff;border:1px solid #a6a6a6;color:#000;"></div>
<div class="c ctr" style="left:154px;top:764px;width:114px;height:22px;background:#fff;border:1px solid #a6a6a6;color:#000;"></div>
<div class="c ctr" style="left:267px;top:764px;width:131px;height:22px;background:#fff;border:1px solid #a6a6a6;color:#000;"></div>
<div class="c ctr" style="left:397px;top:764px;width:107px;height:22px;background:#fff;border:1px solid #a6a6a6;color:#000;"></div>
<div class="c rt" style="left:503px;top:764px;width:88px;height:22px;background:#fff;border:1px solid #a6a6a6;color:#000;padding-right:7px;"></div>
<div class="c ctr" style="left:590px;top:764px;width:110px;height:22px;background:#fff;border:1px solid #a6a6a6;color:#000;"></div>
<div class="c rt" style="left:699px;top:764px;width:110px;height:22px;background:#d9e1f2;border:1px solid #a6a6a6;color:#000;padding-right:7px;"></div>
<div class="c rt" style="left:808px;top:764px;width:110px;height:22px;background:#fff;border:1px solid #a6a6a6;color:#000;padding-right:7px;"></div>
<div class="c ctr" style="left:917px;top:764px;width:110px;height:22px;background:#fff;border:1px solid #a6a6a6;color:#000;"></div>
<div class="c rt" style="left:1026px;top:764px;width:110px;height:22px;background:#fce4d6;border:1px solid #a6a6a6;color:#000;padding-right:7px;"></div>
<div class="c rt" style="left:1135px;top:764px;width:110px;height:22px;background:#fff;border:1px solid #a6a6a6;color:#000;padding-right:7px;"></div>
<div class="c ctr" style="left:1244px;top:764px;width:110px;height:22px;background:#fff;border:1px solid #a6a6a6;color:#000;"></div>
<div class="c rt" style="left:1353px;top:764px;width:110px;height:22px;background:#fff2cc;border:1px solid #a6a6a6;color:#000;padding-right:7px;"></div>
<div class="c rt" style="left:1462px;top:764px;width:110px;height:22px;background:#fff;border:1px solid #a6a6a6;color:#000;padding-right:7px;"></div>
<div class="c rt" style="left:1571px;top:764px;width:110px;height:22px;background:#f2f2f2;border:1px solid #a6a6a6;color:#595959;padding-right:26px;"><span class="t">-</span></div>
<div class="c rt" style="left:1680px;top:764px;width:110px;height:22px;background:#f2f2f2;border:1px solid #a6a6a6;color:#595959;padding-right:7px;"></div>
<div class="c ctr" style="left:1789px;top:764px;width:110px;height:22px;background:#f2f2f2;border:1px solid #a6a6a6;color:#000;"></div>
<div class="c ctr" style="left:-1px;top:785px;width:60px;height:22px;background:#fff;border:1px solid #a6a6a6;color:#000;"></div>
<div class="c ctr" style="left:58px;top:785px;width:97px;height:22px;background:#fff;border:1px solid #a6a6a6;color:#000;"></div>
<div class="c ctr" style="left:154px;top:785px;width:114px;height:22px;background:#fff;border:1px solid #a6a6a6;color:#000;"></div>
<div class="c ctr" style="left:267px;top:785px;width:131px;height:22px;background:#fff;border:1px solid #a6a6a6;color:#000;"></div>
<div class="c ctr" style="left:397px;top:785px;width:107px;height:22px;background:#fff;border:1px solid #a6a6a6;color:#000;"></div>
<div class="c rt" style="left:503px;top:785px;width:88px;height:22px;background:#fff;border:1px solid #a6a6a6;color:#000;padding-right:7px;"></div>
<div class="c ctr" style="left:590px;top:785px;width:110px;height:22px;background:#fff;border:1px solid #a6a6a6;color:#000;"></div>
<div class="c rt" style="left:699px;top:785px;width:110px;height:22px;background:#d9e1f2;border:1px solid #a6a6a6;color:#000;padding-right:7px;"></div>
<div class="c rt" style="left:808px;top:785px;width:110px;height:22px;background:#fff;border:1px solid #a6a6a6;color:#000;padding-right:7px;"></div>
<div class="c ctr" style="left:917px;top:785px;width:110px;height:22px;background:#fff;border:1px solid #a6a6a6;color:#000;"></div>
<div class="c rt" style="left:1026px;top:785px;width:110px;height:22px;background:#fce4d6;border:1px solid #a6a6a6;color:#000;padding-right:7px;"></div>
<div class="c rt" style="left:1135px;top:785px;width:110px;height:22px;background:#fff;border:1px solid #a6a6a6;color:#000;padding-right:7px;"></div>
<div class="c ctr" style="left:1244px;top:785px;width:110px;height:22px;background:#fff;border:1px solid #a6a6a6;color:#000;"></div>
<div class="c rt" style="left:1353px;top:785px;width:110px;height:22px;background:#fff2cc;border:1px solid #a6a6a6;color:#000;padding-right:7px;"></div>
<div class="c rt" style="left:1462px;top:785px;width:110px;height:22px;background:#fff;border:1px solid #a6a6a6;color:#000;padding-right:7px;"></div>
<div class="c rt" style="left:1571px;top:785px;width:110px;height:22px;background:#f2f2f2;border:1px solid #a6a6a6;color:#595959;padding-right:26px;"><span class="t">-</span></div>
<div class="c rt" style="left:1680px;top:785px;width:110px;height:22px;background:#f2f2f2;border:1px solid #a6a6a6;color:#595959;padding-right:7px;"></div>
<div class="c ctr" style="left:1789px;top:785px;width:110px;height:22px;background:#f2f2f2;border:1px solid #a6a6a6;color:#000;"></div>
<div class="c ctr" style="left:-1px;top:806px;width:60px;height:22px;background:#fff;border:1px solid #a6a6a6;color:#000;"></div>
<div class="c ctr" style="left:58px;top:806px;width:97px;height:22px;background:#fff;border:1px solid #a6a6a6;color:#000;"></div>
<div class="c ctr" style="left:154px;top:806px;width:114px;height:22px;background:#fff;border:1px solid #a6a6a6;color:#000;"></div>
<div class="c ctr" style="left:267px;top:806px;width:131px;height:22px;background:#fff;border:1px solid #a6a6a6;color:#000;"></div>
<div class="c ctr" style="left:397px;top:806px;width:107px;height:22px;background:#fff;border:1px solid #a6a6a6;color:#000;"></div>
<div class="c rt" style="left:503px;top:806px;width:88px;height:22px;background:#fff;border:1px solid #a6a6a6;color:#000;padding-right:7px;"></div>
<div class="c ctr" style="left:590px;top:806px;width:110px;height:22px;background:#fff;border:1px solid #a6a6a6;color:#000;"></div>
<div class="c rt" style="left:699px;top:806px;width:110px;height:22px;background:#d9e1f2;border:1px solid #a6a6a6;color:#000;padding-right:7px;"></div>
<div class="c rt" style="left:808px;top:806px;width:110px;height:22px;background:#fff;border:1px solid #a6a6a6;color:#000;padding-right:7px;"></div>
<div class="c ctr" style="left:917px;top:806px;width:110px;height:22px;background:#fff;border:1px solid #a6a6a6;color:#000;"></div>
<div class="c rt" style="left:1026px;top:806px;width:110px;height:22px;background:#fce4d6;border:1px solid #a6a6a6;color:#000;padding-right:7px;"></div>
<div class="c rt" style="left:1135px;top:806px;width:110px;height:22px;background:#fff;border:1px solid #a6a6a6;color:#000;padding-right:7px;"></div>
<div class="c ctr" style="left:1244px;top:806px;width:110px;height:22px;background:#fff;border:1px solid #a6a6a6;color:#000;"></div>
<div class="c rt" style="left:1353px;top:806px;width:110px;height:22px;background:#fff2cc;border:1px solid #a6a6a6;color:#000;padding-right:7px;"></div>
<div class="c rt" style="left:1462px;top:806px;width:110px;height:22px;background:#fff;border:1px solid #a6a6a6;color:#000;padding-right:7px;"></div>
<div class="c rt" style="left:1571px;top:806px;width:110px;height:22px;background:#f2f2f2;border:1px solid #a6a6a6;color:#595959;padding-right:26px;"><span class="t">-</span></div>
<div class="c rt" style="left:1680px;top:806px;width:110px;height:22px;background:#f2f2f2;border:1px solid #a6a6a6;color:#595959;padding-right:7px;"></div>
<div class="c ctr" style="left:1789px;top:806px;width:110px;height:22px;background:#f2f2f2;border:1px solid #a6a6a6;color:#000;"></div>
<div class="c ctr" style="left:-1px;top:827px;width:60px;height:22px;background:#fff;border:1px solid #a6a6a6;color:#000;"></div>
<div class="c ctr" style="left:58px;top:827px;width:97px;height:22px;background:#fff;border:1px solid #a6a6a6;color:#000;"></div>
<div class="c ctr" style="left:154px;top:827px;width:114px;height:22px;background:#fff;border:1px solid #a6a6a6;color:#000;"></div>
<div class="c ctr" style="left:267px;top:827px;width:131px;height:22px;background:#fff;border:1px solid #a6a6a6;color:#000;"></div>
<div class="c ctr" style="left:397px;top:827px;width:107px;height:22px;background:#fff;border:1px solid #a6a6a6;color:#000;"></div>
<div class="c rt" style="left:503px;top:827px;width:88px;height:22px;background:#fff;border:1px solid #a6a6a6;color:#000;padding-right:7px;"></div>
<div class="c ctr" style="left:590px;top:827px;width:110px;height:22px;background:#fff;border:1px solid #a6a6a6;color:#000;"></div>
<div class="c rt" style="left:699px;top:827px;width:110px;height:22px;background:#d9e1f2;border:1px solid #a6a6a6;color:#000;padding-right:7px;"></div>
<div class="c rt" style="left:808px;top:827px;width:110px;height:22px;background:#fff;border:1px solid #a6a6a6;color:#000;padding-right:7px;"></div>
<div class="c ctr" style="left:917px;top:827px;width:110px;height:22px;background:#fff;border:1px solid #a6a6a6;color:#000;"></div>
<div class="c rt" style="left:1026px;top:827px;width:110px;height:22px;background:#fce4d6;border:1px solid #a6a6a6;color:#000;padding-right:7px;"></div>
<div class="c rt" style="left:1135px;top:827px;width:110px;height:22px;background:#fff;border:1px solid #a6a6a6;color:#000;padding-right:7px;"></div>
<div class="c ctr" style="left:1244px;top:827px;width:110px;height:22px;background:#fff;border:1px solid #a6a6a6;color:#000;"></div>
<div class="c rt" style="left:1353px;top:827px;width:110px;height:22px;background:#fff2cc;border:1px solid #a6a6a6;color:#000;padding-right:7px;"></div>
<div class="c rt" style="left:1462px;top:827px;width:110px;height:22px;background:#fff;border:1px solid #a6a6a6;color:#000;padding-right:7px;"></div>
<div class="c rt" style="left:1571px;top:827px;width:110px;height:22px;background:#f2f2f2;border:1px solid #a6a6a6;color:#595959;padding-right:26px;"><span class="t">-</span></div>
<div class="c rt" style="left:1680px;top:827px;width:110px;height:22px;background:#f2f2f2;border:1px solid #a6a6a6;color:#595959;padding-right:7px;"></div>
<div class="c ctr" style="left:1789px;top:827px;width:110px;height:22px;background:#f2f2f2;border:1px solid #a6a6a6;color:#000;"></div>
<div class="c ctr" style="left:-1px;top:848px;width:60px;height:22px;background:#fff;border:1px solid #a6a6a6;color:#000;"></div>
<div class="c ctr" style="left:58px;top:848px;width:97px;height:22px;background:#fff;border:1px solid #a6a6a6;color:#000;"></div>
<div class="c ctr" style="left:154px;top:848px;width:114px;height:22px;background:#fff;border:1px solid #a6a6a6;color:#000;"></div>
<div class="c ctr" style="left:267px;top:848px;width:131px;height:22px;background:#fff;border:1px solid #a6a6a6;color:#000;"></div>
<div class="c ctr" style="left:397px;top:848px;width:107px;height:22px;background:#fff;border:1px solid #a6a6a6;color:#000;"></div>
<div class="c rt" style="left:503px;top:848px;width:88px;height:22px;background:#fff;border:1px solid #a6a6a6;color:#000;padding-right:7px;"></div>
<div class="c ctr" style="left:590px;top:848px;width:110px;height:22px;background:#fff;border:1px solid #a6a6a6;color:#000;"></div>
<div class="c rt" style="left:699px;top:848px;width:110px;height:22px;background:#d9e1f2;border:1px solid #a6a6a6;color:#000;padding-right:7px;"></div>
<div class="c rt" style="left:808px;top:848px;width:110px;height:22px;background:#fff;border:1px solid #a6a6a6;color:#000;padding-right:7px;"></div>
<div class="c ctr" style="left:917px;top:848px;width:110px;height:22px;background:#fff;border:1px solid #a6a6a6;color:#000;"></div>
<div class="c rt" style="left:1026px;top:848px;width:110px;height:22px;background:#fce4d6;border:1px solid #a6a6a6;color:#000;padding-right:7px;"></div>
<div class="c rt" style="left:1135px;top:848px;width:110px;height:22px;background:#fff;border:1px solid #a6a6a6;color:#000;padding-right:7px;"></div>
<div class="c ctr" style="left:1244px;top:848px;width:110px;height:22px;background:#fff;border:1px solid #a6a6a6;color:#000;"></div>
<div class="c rt" style="left:1353px;top:848px;width:110px;height:22px;background:#fff2cc;border:1px solid #a6a6a6;color:#000;padding-right:7px;"></div>
<div class="c rt" style="left:1462px;top:848px;width:110px;height:22px;background:#fff;border:1px solid #a6a6a6;color:#000;padding-right:7px;"></div>
<div class="c rt" style="left:1571px;top:848px;width:110px;height:22px;background:#f2f2f2;border:1px solid #a6a6a6;color:#595959;padding-right:26px;"><span class="t">-</span></div>
<div class="c rt" style="left:1680px;top:848px;width:110px;height:22px;background:#f2f2f2;border:1px solid #a6a6a6;color:#595959;padding-right:7px;"></div>
<div class="c ctr" style="left:1789px;top:848px;width:110px;height:22px;background:#f2f2f2;border:1px solid #a6a6a6;color:#000;"></div>
<div class="c ctr" style="left:-1px;top:869px;width:60px;height:22px;background:#fff;border:1px solid #a6a6a6;color:#000;"></div>
<div class="c ctr" style="left:58px;top:869px;width:97px;height:22px;background:#fff;border:1px solid #a6a6a6;color:#000;"></div>
<div class="c ctr" style="left:154px;top:869px;width:114px;height:22px;background:#fff;border:1px solid #a6a6a6;color:#000;"></div>
<div class="c ctr" style="left:267px;top:869px;width:131px;height:22px;background:#fff;border:1px solid #a6a6a6;color:#000;"></div>
<div class="c ctr" style="left:397px;top:869px;width:107px;height:22px;background:#fff;border:1px solid #a6a6a6;color:#000;"></div>
<div class="c rt" style="left:503px;top:869px;width:88px;height:22px;background:#fff;border:1px solid #a6a6a6;color:#000;padding-right:7px;"></div>
<div class="c ctr" style="left:590px;top:869px;width:110px;height:22px;background:#fff;border:1px solid #a6a6a6;color:#000;"></div>
<div class="c rt" style="left:699px;top:869px;width:110px;height:22px;background:#d9e1f2;border:1px solid #a6a6a6;color:#000;padding-right:7px;"></div>
<div class="c rt" style="left:808px;top:869px;width:110px;height:22px;background:#fff;border:1px solid #a6a6a6;color:#000;padding-right:7px;"></div>
<div class="c ctr" style="left:917px;top:869px;width:110px;height:22px;background:#fff;border:1px solid #a6a6a6;color:#000;"></div>
<div class="c rt" style="left:1026px;top:869px;width:110px;height:22px;background:#fce4d6;border:1px solid #a6a6a6;color:#000;padding-right:7px;"></div>
<div class="c rt" style="left:1135px;top:869px;width:110px;height:22px;background:#fff;border:1px solid #a6a6a6;color:#000;padding-right:7px;"></div>
<div class="c ctr" style="left:1244px;top:869px;width:110px;height:22px;background:#fff;border:1px solid #a6a6a6;color:#000;"></div>
<div class="c rt" style="left:1353px;top:869px;width:110px;height:22px;background:#fff2cc;border:1px solid #a6a6a6;color:#000;padding-right:7px;"></div>
<div class="c rt" style="left:1462px;top:869px;width:110px;height:22px;background:#fff;border:1px solid #a6a6a6;color:#000;padding-right:7px;"></div>
<div class="c rt" style="left:1571px;top:869px;width:110px;height:22px;background:#f2f2f2;border:1px solid #a6a6a6;color:#595959;padding-right:26px;"><span class="t">-</span></div>
<div class="c rt" style="left:1680px;top:869px;width:110px;height:22px;background:#f2f2f2;border:1px solid #a6a6a6;color:#595959;padding-right:7px;"></div>
<div class="c ctr" style="left:1789px;top:869px;width:110px;height:22px;background:#f2f2f2;border:1px solid #a6a6a6;color:#000;"></div>
<div class="c ctr" style="left:-1px;top:890px;width:60px;height:22px;background:#fff;border:1px solid #a6a6a6;color:#000;"></div>
<div class="c ctr" style="left:58px;top:890px;width:97px;height:22px;background:#fff;border:1px solid #a6a6a6;color:#000;"></div>
<div class="c ctr" style="left:154px;top:890px;width:114px;height:22px;background:#fff;border:1px solid #a6a6a6;color:#000;"></div>
<div class="c ctr" style="left:267px;top:890px;width:131px;height:22px;background:#fff;border:1px solid #a6a6a6;color:#000;"></div>
<div class="c ctr" style="left:397px;top:890px;width:107px;height:22px;background:#fff;border:1px solid #a6a6a6;color:#000;"></div>
<div class="c rt" style="left:503px;top:890px;width:88px;height:22px;background:#fff;border:1px solid #a6a6a6;color:#000;padding-right:7px;"></div>
<div class="c ctr" style="left:590px;top:890px;width:110px;height:22px;background:#fff;border:1px solid #a6a6a6;color:#000;"></div>
<div class="c rt" style="left:699px;top:890px;width:110px;height:22px;background:#d9e1f2;border:1px solid #a6a6a6;color:#000;padding-right:7px;"></div>
<div class="c rt" style="left:808px;top:890px;width:110px;height:22px;background:#fff;border:1px solid #a6a6a6;color:#000;padding-right:7px;"></div>
<div class="c ctr" style="left:917px;top:890px;width:110px;height:22px;background:#fff;border:1px solid #a6a6a6;color:#000;"></div>
<div class="c rt" style="left:1026px;top:890px;width:110px;height:22px;background:#fce4d6;border:1px solid #a6a6a6;color:#000;padding-right:7px;"></div>
<div class="c rt" style="left:1135px;top:890px;width:110px;height:22px;background:#fff;border:1px solid #a6a6a6;color:#000;padding-right:7px;"></div>
<div class="c ctr" style="left:1244px;top:890px;width:110px;height:22px;background:#fff;border:1px solid #a6a6a6;color:#000;"></div>
<div class="c rt" style="left:1353px;top:890px;width:110px;height:22px;background:#fff2cc;border:1px solid #a6a6a6;color:#000;padding-right:7px;"></div>
<div class="c rt" style="left:1462px;top:890px;width:110px;height:22px;background:#fff;border:1px solid #a6a6a6;color:#000;padding-right:7px;"></div>
<div class="c rt" style="left:1571px;top:890px;width:110px;height:22px;background:#f2f2f2;border:1px solid #a6a6a6;color:#595959;padding-right:26px;"><span class="t">-</span></div>
<div class="c rt" style="left:1680px;top:890px;width:110px;height:22px;background:#f2f2f2;border:1px solid #a6a6a6;color:#595959;padding-right:7px;"></div>
<div class="c ctr" style="left:1789px;top:890px;width:110px;height:22px;background:#f2f2f2;border:1px solid #a6a6a6;color:#000;"></div>
<div class="c ctr" style="left:-1px;top:911px;width:60px;height:22px;background:#fff;border:1px solid #a6a6a6;color:#000;"></div>
<div class="c ctr" style="left:58px;top:911px;width:97px;height:22px;background:#fff;border:1px solid #a6a6a6;color:#000;"></div>
<div class="c ctr" style="left:154px;top:911px;width:114px;height:22px;background:#fff;border:1px solid #a6a6a6;color:#000;"></div>
<div class="c ctr" style="left:267px;top:911px;width:131px;height:22px;background:#fff;border:1px solid #a6a6a6;color:#000;"></div>
<div class="c ctr" style="left:397px;top:911px;width:107px;height:22px;background:#fff;border:1px solid #a6a6a6;color:#000;"></div>
<div class="c rt" style="left:503px;top:911px;width:88px;height:22px;background:#fff;border:1px solid #a6a6a6;color:#000;padding-right:7px;"></div>
<div class="c ctr" style="left:590px;top:911px;width:110px;height:22px;background:#fff;border:1px solid #a6a6a6;color:#000;"></div>
<div class="c rt" style="left:699px;top:911px;width:110px;height:22px;background:#d9e1f2;border:1px solid #a6a6a6;color:#000;padding-right:7px;"></div>
<div class="c rt" style="left:808px;top:911px;width:110px;height:22px;background:#fff;border:1px solid #a6a6a6;color:#000;padding-right:7px;"></div>
<div class="c ctr" style="left:917px;top:911px;width:110px;height:22px;background:#fff;border:1px solid #a6a6a6;color:#000;"></div>
<div class="c rt" style="left:1026px;top:911px;width:110px;height:22px;background:#fce4d6;border:1px solid #a6a6a6;color:#000;padding-right:7px;"></div>
<div class="c rt" style="left:1135px;top:911px;width:110px;height:22px;background:#fff;border:1px solid #a6a6a6;color:#000;padding-right:7px;"></div>
<div class="c ctr" style="left:1244px;top:911px;width:110px;height:22px;background:#fff;border:1px solid #a6a6a6;color:#000;"></div>
<div class="c rt" style="left:1353px;top:911px;width:110px;height:22px;background:#fff2cc;border:1px solid #a6a6a6;color:#000;padding-right:7px;"></div>
<div class="c rt" style="left:1462px;top:911px;width:110px;height:22px;background:#fff;border:1px solid #a6a6a6;color:#000;padding-right:7px;"></div>
<div class="c rt" style="left:1571px;top:911px;width:110px;height:22px;background:#f2f2f2;border:1px solid #a6a6a6;color:#595959;padding-right:26px;"><span class="t">-</span></div>
<div class="c rt" style="left:1680px;top:911px;width:110px;height:22px;background:#f2f2f2;border:1px solid #a6a6a6;color:#595959;padding-right:7px;"></div>
<div class="c ctr" style="left:1789px;top:911px;width:110px;height:22px;background:#f2f2f2;border:1px solid #a6a6a6;color:#000;"></div>
<div class="a" style="left:268px;top:491px;width:21px;height:22px;background:linear-gradient(#f0f0f0,#fff);border:1px solid #b0b0b0"></div>
<svg class="a" style="left:275px;top:501px" width="8" height="5"><path d="M0 0H8L4 4.5Z" fill="#6b6b6b"/></svg>
<div class="a" style="left:0;top:0;width:1894px;height:273px;background:#fff"></div>
</div>
<div class="a" style="left:34px;top:52px;width:212px;height:24px;background:#f0f0f0;border-bottom:2px solid #8a8a8a;border-right:2px solid #8a8a8a"></div>
<div class="a" style="left:138px;top:53px;width:1px;height:21px;background:#c8c8c8"></div>
<div class="a" style="left:34px;top:52px;width:104px;height:22px;font-size:15px;line-height:24px;text-align:center;color:#1a1a1a">Refresh</div>
<div class="a" style="left:139px;top:52px;width:105px;height:22px;font-size:15px;line-height:24px;text-align:center;color:#1a1a1a">Full Screen</div>
<div class="a" style="left:44px;top:81px;font-size:15.5px;line-height:20px;color:#1a1a1a">Plant / Line</div>
<svg class="a" style="left:174px;top:82px" width="21" height="19" viewBox="0 0 21 19">
<path d="M1.2 2.6L3.9 5.2L8.6 0.6M1.2 8.5L3.9 11.1L8.6 6.5M1.2 14.3L3.9 16.9L8.6 12.3" fill="none" stroke="#444" stroke-width="1.6"/>
<path d="M10.5 4.1H19.7M10.5 9.9H19.7M10.5 16H19.7" stroke="#555" stroke-width="1.7"/></svg>
<svg class="a" style="left:211px;top:82px" width="21" height="20" viewBox="0 0 21 20">
<path d="M1.3 0.6H19.6V3.6L13.4 9.1L12 10.5V18.6H8.6V10.1L1.3 3.6Z" fill="#f2f2f2" stroke="none"/>
<path d="M1.3 3.6V0.6H19.6V3.6L13.4 9.1M1.3 3.6L8.6 10.1V18.6" fill="none" stroke="#8c8c8c" stroke-width="1.4"/>
<path d="M12.2 11.1L19.6 18.4M19.6 11.1L12.2 18.4" stroke="#a8a8a8" stroke-width="1"/></svg>
<div class="a" style="left:43px;top:111px;width:94px;height:29px;background:#a0a8ae;border-radius:3px;font-size:15.5px;line-height:30px;padding-left:11px;color:#111"><span class="sy">PL0001</span></div>
<div class="a" style="left:141px;top:111px;width:94px;height:29px;background:#a0a8ae;border-radius:3px;font-size:15.5px;line-height:30px;padding-left:11px;color:#111"><span class="sy">PL0002</span></div>
<div class="a" style="left:44px;top:172px;font-size:15.5px;line-height:20px;color:#1a1a1a">Product ID</div>
<svg class="a" style="left:175px;top:172px" width="21" height="19" viewBox="0 0 21 19">
<path d="M1.2 2.6L3.9 5.2L8.6 0.6M1.2 8.5L3.9 11.1L8.6 6.5M1.2 14.3L3.9 16.9L8.6 12.3" fill="none" stroke="#444" stroke-width="1.6"/>
<path d="M10.5 4.1H19.7M10.5 9.9H19.7M10.5 16H19.7" stroke="#555" stroke-width="1.7"/></svg>
<svg class="a" style="left:212px;top:172px" width="21" height="20" viewBox="0 0 21 20">
<path d="M1.3 0.6H19.6V3.6L13.4 9.1L12 10.5V18.6H8.6V10.1L1.3 3.6Z" fill="#f2f2f2" stroke="none"/>
<path d="M1.3 3.6V0.6H19.6V3.6L13.4 9.1M1.3 3.6L8.6 10.1V18.6" fill="none" stroke="#8c8c8c" stroke-width="1.4"/>
<path d="M12.2 11.1L19.6 18.4M19.6 11.1L12.2 18.4" stroke="#a8a8a8" stroke-width="1"/></svg>
<div class="a" style="left:43px;top:203px;width:167px;height:29px;background:#a0a8ae;border-radius:3px;font-size:15.5px;line-height:30px;padding-left:11px;color:#111"><span class="sy">#10003</span></div>
<div class="a" style="left:43px;top:236px;width:167px;height:29px;background:#a0a8ae;border-radius:3px;font-size:15.5px;line-height:30px;padding-left:11px;color:#111"><span class="sy">#10004</span></div>
<div class="a" style="left:43px;top:269px;width:167px;height:29px;background:#a0a8ae;border-radius:3px;font-size:15.5px;line-height:30px;padding-left:11px;color:#111"><span class="sy">#10005</span></div>
<div class="a" style="left:214px;top:203px;width:22px;height:109px;background:#f0f0f0"></div>
<div class="a" style="left:221px;top:252px;width:8px;height:37px;background:#858585"></div>
<div class="a" style="left:246px;top:58px;width:382px;height:261px;background:#f2f2f2;border:2px solid #c6c6c6;border-radius:40px;box-shadow:3px 3px 5px rgba(0,0,0,0.35)"></div>
<div class="a" style="left:639px;top:58px;width:331px;height:261px;background:#f2f2f2;border:2px solid #c6c6c6;border-radius:40px;box-shadow:3px 3px 5px rgba(0,0,0,0.35)"></div>
<div class="a" style="left:982px;top:58px;width:313px;height:198px;background:#f2f2f2;border:2px solid #c6c6c6;border-radius:40px;box-shadow:3px 3px 5px rgba(0,0,0,0.35)"></div>
<div class="a" style="left:1307px;top:58px;width:653px;height:261px;background:#f2f2f2;border:2px solid #c6c6c6;border-radius:40px;box-shadow:3px 3px 5px rgba(0,0,0,0.35)"></div>
<svg class="a" style="left:247px;top:59px" width="380" height="260" viewBox="247 59 380 260" font-family="Liberation Sans">
<text x="270" y="84" font-size="16.5" font-weight="bold" fill="#595959">Warehouse Status</text>
<rect x="421" y="75" width="7" height="7" fill="#c00000"/>
<text x="431" y="82.5" font-size="11" fill="#595959">Occupied Space</text>
<rect x="524" y="75" width="7" height="7" fill="#2ab48c"/>
<text x="534" y="82.5" font-size="11" fill="#595959">Available Space</text>
<line x1="291.5" y1="92" x2="291.5" y2="289" stroke="#d9d9d9" stroke-width="1"/>
<rect x="292" y="95.90" width="47.10" height="5.2" fill="#c00000"/>
<rect x="339.10" y="95.90" width="256.90" height="5.2" fill="#2ab48c"/>
<text x="283" y="101.00" font-size="9" fill="#595959" text-anchor="end">D8</text>
<rect x="292" y="107.37" width="80.10" height="5.2" fill="#c00000"/>
<rect x="372.10" y="107.37" width="223.90" height="5.2" fill="#2ab48c"/>
<text x="283" y="112.47" font-size="9" fill="#595959" text-anchor="end">D7</text>
<rect x="292" y="118.84" width="85.10" height="5.2" fill="#c00000"/>
<rect x="377.10" y="118.84" width="218.90" height="5.2" fill="#2ab48c"/>
<text x="283" y="123.94" font-size="9" fill="#595959" text-anchor="end">D6</text>
<rect x="292" y="130.31" width="56.20" height="5.2" fill="#c00000"/>
<rect x="348.20" y="130.31" width="247.80" height="5.2" fill="#2ab48c"/>
<text x="283" y="135.41" font-size="9" fill="#595959" text-anchor="end">D24</text>
<rect x="292" y="141.78" width="66.10" height="5.2" fill="#c00000"/>
<rect x="358.10" y="141.78" width="237.90" height="5.2" fill="#2ab48c"/>
<text x="283" y="146.88" font-size="9" fill="#595959" text-anchor="end">D1</text>
<rect x="292" y="153.25" width="76.00" height="5.2" fill="#c00000"/>
<rect x="368.00" y="153.25" width="228.00" height="5.2" fill="#2ab48c"/>
<text x="283" y="158.35" font-size="9" fill="#595959" text-anchor="end">C9</text>
<rect x="292" y="164.72" width="60.90" height="5.2" fill="#c00000"/>
<rect x="352.90" y="164.72" width="243.10" height="5.2" fill="#2ab48c"/>
<text x="283" y="169.82" font-size="9" fill="#595959" text-anchor="end">C12</text>
<rect x="292" y="176.19" width="95.00" height="5.2" fill="#c00000"/>
<rect x="387.00" y="176.19" width="209.00" height="5.2" fill="#2ab48c"/>
<text x="283" y="181.29" font-size="9" fill="#595959" text-anchor="end">C11</text>
<rect x="292" y="187.66" width="103.00" height="5.2" fill="#c00000"/>
<rect x="395.00" y="187.66" width="201.00" height="5.2" fill="#2ab48c"/>
<text x="283" y="192.76" font-size="9" fill="#595959" text-anchor="end">C10</text>
<rect x="292" y="199.13" width="89.00" height="5.2" fill="#c00000"/>
<rect x="381.00" y="199.13" width="215.00" height="5.2" fill="#2ab48c"/>
<text x="283" y="204.23" font-size="9" fill="#595959" text-anchor="end">B8</text>
<rect x="292" y="210.60" width="98.00" height="5.2" fill="#c00000"/>
<rect x="390.00" y="210.60" width="206.00" height="5.2" fill="#2ab48c"/>
<text x="283" y="215.70" font-size="9" fill="#595959" text-anchor="end">B7</text>
<rect x="292" y="222.07" width="0.00" height="5.2" fill="#c00000"/>
<rect x="292.00" y="222.07" width="304.00" height="5.2" fill="#2ab48c"/>
<text x="283" y="227.17" font-size="9" fill="#595959" text-anchor="end">B22</text>
<rect x="292" y="233.54" width="6.40" height="5.2" fill="#c00000"/>
<rect x="298.40" y="233.54" width="297.60" height="5.2" fill="#2ab48c"/>
<text x="283" y="238.64" font-size="9" fill="#595959" text-anchor="end">B12</text>
<rect x="292" y="245.01" width="71.00" height="5.2" fill="#c00000"/>
<rect x="363.00" y="245.01" width="233.00" height="5.2" fill="#2ab48c"/>
<text x="283" y="250.11" font-size="9" fill="#595959" text-anchor="end">B11</text>
<rect x="292" y="256.48" width="63.90" height="5.2" fill="#c00000"/>
<rect x="355.90" y="256.48" width="240.10" height="5.2" fill="#2ab48c"/>
<text x="283" y="261.58" font-size="9" fill="#595959" text-anchor="end">A5</text>
<rect x="292" y="267.95" width="52.90" height="5.2" fill="#c00000"/>
<rect x="344.90" y="267.95" width="251.10" height="5.2" fill="#2ab48c"/>
<text x="283" y="273.05" font-size="9" fill="#595959" text-anchor="end">A30</text>
<rect x="292" y="279.42" width="71.00" height="5.2" fill="#c00000"/>
<rect x="363.00" y="279.42" width="233.00" height="5.2" fill="#2ab48c"/>
<text x="283" y="284.52" font-size="9" fill="#595959" text-anchor="end">A24</text>
<text x="291.0" y="308" font-size="11.5" fill="#595959" text-anchor="middle">0%</text>
<text x="352.1" y="308" font-size="11.5" fill="#595959" text-anchor="middle">20%</text>
<text x="413.2" y="308" font-size="11.5" fill="#595959" text-anchor="middle">40%</text>
<text x="474.3" y="308" font-size="11.5" fill="#595959" text-anchor="middle">60%</text>
<text x="535.4" y="308" font-size="11.5" fill="#595959" text-anchor="middle">80%</text>
<text x="596.5" y="308" font-size="11.5" fill="#595959" text-anchor="middle">100%</text>
</svg>
<svg class="a" style="left:640px;top:59px" width="329" height="260" viewBox="640 59 329 260" font-family="Liberation Sans">
<text x="814.5" y="86" font-size="17" fill="#595959" text-anchor="middle">Ready Batches to Ship</text>
<line x1="680.5" y1="93" x2="680.5" y2="310" stroke="#d9d9d9" stroke-width="1"/>
<rect x="681" y="128" width="231" height="39" fill="#2ab48c"/>
<rect x="681" y="237" width="167" height="39" fill="#2ab48c"/>
<text x="663" y="152" font-size="12.5" fill="#404040" text-anchor="middle">C</text>
<text x="663" y="261" font-size="12.5" fill="#404040" text-anchor="middle">B</text>
<text x="925" y="153" font-size="12.5" fill="#404040">2,534</text>
<text x="861" y="262" font-size="12.5" fill="#404040">1,836</text>
</svg>
<svg class="a" style="left:983px;top:59px" width="311" height="197" viewBox="983 59 311 197" font-family="Liberation Sans">
<path d="M1142.40 78.90A83.4 83.4 0 0 1 1184.10 234.53L1163.90 199.54A43 43 0 0 0 1142.40 119.30Z" fill="#2ab48c" stroke="#fff" stroke-width="2"/>
<path d="M1184.10 234.53A83.4 83.4 0 1 1 1142.40 78.90L1142.40 119.30A43 43 0 1 0 1163.90 199.54Z" fill="#a0a8ae" stroke="#fff" stroke-width="2"/>
<text x="1142.4" y="79" font-size="16.5" fill="#595959" text-anchor="middle">Orders Status</text>
<text x="1142.4" y="175.5" font-size="38.5" fill="#45ae75" text-anchor="middle">12</text>
<text x="1203.5" y="134" font-size="12.5" fill="#404040" text-anchor="middle">Completed</text>
<text x="1203.5" y="150.5" font-size="12.5" fill="#404040" text-anchor="middle">5</text>
<text x="1203.5" y="167" font-size="12.5" fill="#404040" text-anchor="middle">42%</text>
<text x="1081.5" y="166.5" font-size="12.5" fill="#404040" text-anchor="middle">Not Finished</text>
<text x="1081.5" y="183.5" font-size="12.5" fill="#404040" text-anchor="middle">7</text>
<text x="1081.5" y="200.5" font-size="12.5" fill="#404040" text-anchor="middle">58%</text>
</svg>
<div class="a" style="left:993px;top:274px;font-size:14px;line-height:19px;color:#000">Row Color<br>References --&gt;</div>
<div class="a" style="left:1099px;top:261px;width:195px;height:65px;background:#a6a6a6"></div>
<div class="a" style="left:1100px;top:262px;width:194px;height:20px;background:#2ab48c;color:#fff;font-size:11.5px;line-height:20px;text-align:center">Completed FIFO Orders</div>
<div class="a" style="left:1100px;top:283px;width:194px;height:20px;background:#124a64;color:#fff;font-size:11.5px;line-height:20px;text-align:center">Available Inventory for Ship.</div>
<div class="a" style="left:1100px;top:305px;width:194px;height:20px;background:#c00000;color:#fff;font-size:11.5px;line-height:20px;text-align:center">No Available&nbsp; Inventory&nbsp; for Ship.</div>
<svg class="a" style="left:1308px;top:59px" width="586" height="260" viewBox="1308 59 586 260" font-family="Liberation Sans">
<rect x="1418" y="78.5" width="8" height="8" fill="#2ab48c"/>
<text x="1430.5" y="87" font-size="13" letter-spacing="0.82" fill="#595959">Total Shipped Quantity</text>
<rect x="1599" y="78.5" width="8" height="8" fill="#a0a8ae"/>
<text x="1612" y="87" font-size="13" letter-spacing="0.82" fill="#595959">Remain quantity</text>
<line x1="1366" y1="111.2" x2="1767" y2="111.2" stroke="#d9d9d9" stroke-width="1"/>
<text x="1352" y="115.7" font-size="12.5" fill="#595959" text-anchor="end">100%</text>
<line x1="1366" y1="145.2" x2="1767" y2="145.2" stroke="#d9d9d9" stroke-width="1"/>
<text x="1352" y="149.7" font-size="12.5" fill="#595959" text-anchor="end">80%</text>
<line x1="1366" y1="179.2" x2="1767" y2="179.2" stroke="#d9d9d9" stroke-width="1"/>
<text x="1352" y="183.7" font-size="12.5" fill="#595959" text-anchor="end">60%</text>
<line x1="1366" y1="213.3" x2="1767" y2="213.3" stroke="#d9d9d9" stroke-width="1"/>
<text x="1352" y="217.8" font-size="12.5" fill="#595959" text-anchor="end">40%</text>
<line x1="1366" y1="247.3" x2="1767" y2="247.3" stroke="#d9d9d9" stroke-width="1"/>
<text x="1352" y="251.8" font-size="12.5" fill="#595959" text-anchor="end">20%</text>
<line x1="1366" y1="281.3" x2="1767" y2="281.3" stroke="#d9d9d9" stroke-width="1"/>
<text x="1352" y="285.8" font-size="12.5" fill="#595959" text-anchor="end">0%</text>
<rect x="1396" y="111.2" width="40" height="83.8" fill="#a0a8ae"/>
<rect x="1396" y="195" width="40" height="86.3" fill="#2ab48c"/>
<text x="1416" y="159.2" font-size="12.5" fill="#404040" text-anchor="middle">2770</text>
<text x="1416" y="244.0" font-size="12.5" fill="#404040" text-anchor="middle">2840</text>
<text x="1416" y="305" font-size="12.5" fill="#595959" text-anchor="middle">ABB</text>
<rect x="1497" y="111.2" width="40" height="37.8" fill="#a0a8ae"/>
<rect x="1497" y="149" width="40" height="132.3" fill="#2ab48c"/>
<text x="1517" y="136.0" font-size="12.5" fill="#404040" text-anchor="middle">1680</text>
<text x="1517" y="221.1" font-size="12.5" fill="#404040" text-anchor="middle">5800</text>
<text x="1517" y="305" font-size="12.5" fill="#595959" text-anchor="middle">ABC</text>
<rect x="1597" y="111.2" width="40" height="170.1" fill="#a0a8ae"/>
<text x="1617" y="202.1" font-size="12.5" fill="#404040" text-anchor="middle">420</text>
<text x="1617" y="287.1" font-size="12.5" fill="#404040" text-anchor="middle">0</text>
<text x="1617" y="305" font-size="12.5" fill="#595959" text-anchor="middle">ACC</text>
<rect x="1697" y="111.2" width="40" height="32.2" fill="#a0a8ae"/>
<rect x="1697" y="143.4" width="40" height="137.9" fill="#2ab48c"/>
<text x="1717" y="132.8" font-size="12.5" fill="#404040" text-anchor="middle">699</text>
<text x="1717" y="218.2" font-size="12.5" fill="#404040" text-anchor="middle">3000</text>
<text x="1717" y="305" font-size="12.5" fill="#595959" text-anchor="middle">BAC</text>
</svg>
<div class="a" style="left:1778px;top:78px;font-size:15.5px;line-height:20px;letter-spacing:0.5px;color:#1a1a1a">Produc...</div>
<svg class="a" style="left:1850px;top:77px" width="21" height="19" viewBox="0 0 21 19">
<path d="M1.2 2.6L3.9 5.2L8.6 0.6M1.2 8.5L3.9 11.1L8.6 6.5M1.2 14.3L3.9 16.9L8.6 12.3" fill="none" stroke="#444" stroke-width="1.6"/>
<path d="M10.5 4.1H19.7M10.5 9.9H19.7M10.5 16H19.7" stroke="#555" stroke-width="1.7"/></svg>
<svg class="a" style="left:1887px;top:78px" width="7" height="12"><path d="M1 1.5H8M1 1.5L7 9.5" fill="none" stroke="#8c8c8c" stroke-width="1.3"/></svg>
<div class="a" style="left:1777px;top:108px;width:130px;height:29px;background:#a0a8ae;border-radius:3px;font-size:15.5px;line-height:30px;padding-left:11px;color:#111"><span class="sy">#10001</span></div>
<div class="a" style="left:1777px;top:141px;width:130px;height:29px;background:#a0a8ae;border-radius:3px;font-size:15.5px;line-height:30px;padding-left:11px;color:#111"><span class="sy">#10002</span></div>
<div class="a" style="left:1777px;top:174px;width:130px;height:29px;background:#a0a8ae;border-radius:3px;font-size:15.5px;line-height:30px;padding-left:11px;color:#111"><span class="sy">#10003</span></div>
<div class="a" style="left:1777px;top:207px;width:130px;height:29px;background:#a0a8ae;border-radius:3px;font-size:15.5px;line-height:30px;padding-left:11px;color:#111"><span class="sy">#10004</span></div>
<div class="a" style="left:1894px;top:29px;width:24px;height:951px;background:#f0f0f0"></div>
<div class="a" style="left:1894px;top:52px;width:1px;height:928px;background:#d8d8d8"></div>
<div class="a" style="left:1897px;top:30px;width:23px;height:952px;background:#f6f6f6;border-radius:10px"></div>
<svg class="a" style="left:1901px;top:34px" width="13" height="10"><path d="M6.5 1L12.5 9H0.5Z" fill="#6e6e6e"/></svg>
<div class="a" style="left:1902px;top:50px;width:11px;height:696px;background:#6e6e6e;border-radius:6px"></div>
<svg class="a" style="left:1901px;top:966px" width="13" height="10"><path d="M0.5 1H12.5L6.5 9Z" fill="#6e6e6e"/></svg>
<div class="a" style="left:0;top:980px;width:1918px;height:37px;background:#f0f0f0"></div>
<svg class="a" style="left:30px;top:991px" width="10" height="16"><path d="M8 1L2 8L8 15" fill="none" stroke="#8a8a8a" stroke-width="1.3"/></svg>
<svg class="a" style="left:71px;top:991px" width="10" height="16"><path d="M2 1L8 8L2 15" fill="none" stroke="#8a8a8a" stroke-width="1.3"/></svg>
<div class="a" style="left:141px;top:985px;width:113px;height:30px;background:#124a64;border-radius:6px;color:#fff;font-size:17.5px;line-height:33px;text-align:center">Instructions</div>
<div class="a" style="left:259px;top:988px;width:1px;height:24px;background:#c8c8c8"></div>
<div class="a" style="left:265px;top:985px;width:151px;height:30px;background:#a0a8ae;border-radius:6px;color:#1a1a1a;font-size:17.5px;line-height:33px;text-align:center">Setting and Lists</div>
<div class="a" style="left:421px;top:988px;width:1px;height:24px;background:#c8c8c8"></div>
<div class="a" style="left:427px;top:985px;width:206px;height:30px;background:#2ab48c;border-radius:6px;color:#1a1a1a;font-size:17.5px;line-height:33px;text-align:center">Inventory Management</div>
<div class="a" style="left:638px;top:988px;width:1px;height:24px;background:#c8c8c8"></div>
<div class="a" style="left:643px;top:980px;width:227px;height:37px;background:#fff;border-radius:6px 6px 0 0;border:1px solid #e0e0e0;border-bottom:none"></div>
<div class="a" style="left:645px;top:983px;width:223px;height:31px;background:linear-gradient(#fff 0%,#e6ecf0 40%,#a9b9c4 100%);border-radius:5px;color:#1f1f1f;font-size:17px;line-height:28px;text-align:center">Orders FIFO Management</div>
<div class="a" style="left:654px;top:1009px;width:205px;height:2px;background:#107c41"></div>
<div class="a" style="left:874px;top:988px;width:1px;height:24px;background:#c8c8c8"></div>
<svg class="a" style="left:926px;top:991px" width="16" height="16"><path d="M8 1V15M1 8H15" stroke="#7a7a7a" stroke-width="1.3"/></svg>
<svg class="a" style="left:1153px;top:992px" width="6" height="16"><circle cx="3" cy="2.5" r="1.5" fill="#444"/><circle cx="3" cy="8" r="1.5" fill="#444"/><circle cx="3" cy="13.5" r="1.5" fill="#444"/></svg>
<div class="a" style="left:1176px;top:989px;width:718px;height:21px;background:#f8f8f8;border-radius:10px"></div>
<svg class="a" style="left:1180px;top:992px" width="10" height="14"><path d="M9 1V13L1 7Z" fill="#6e6e6e"/></svg>
<div class="a" style="left:1197px;top:994px;width:149px;height:11px;background:#6e6e6e;border-radius:6px"></div>
<svg class="a" style="left:1878px;top:992px" width="10" height="14"><path d="M1 1V13L9 7Z" fill="#6e6e6e"/></svg>
</body></html>
